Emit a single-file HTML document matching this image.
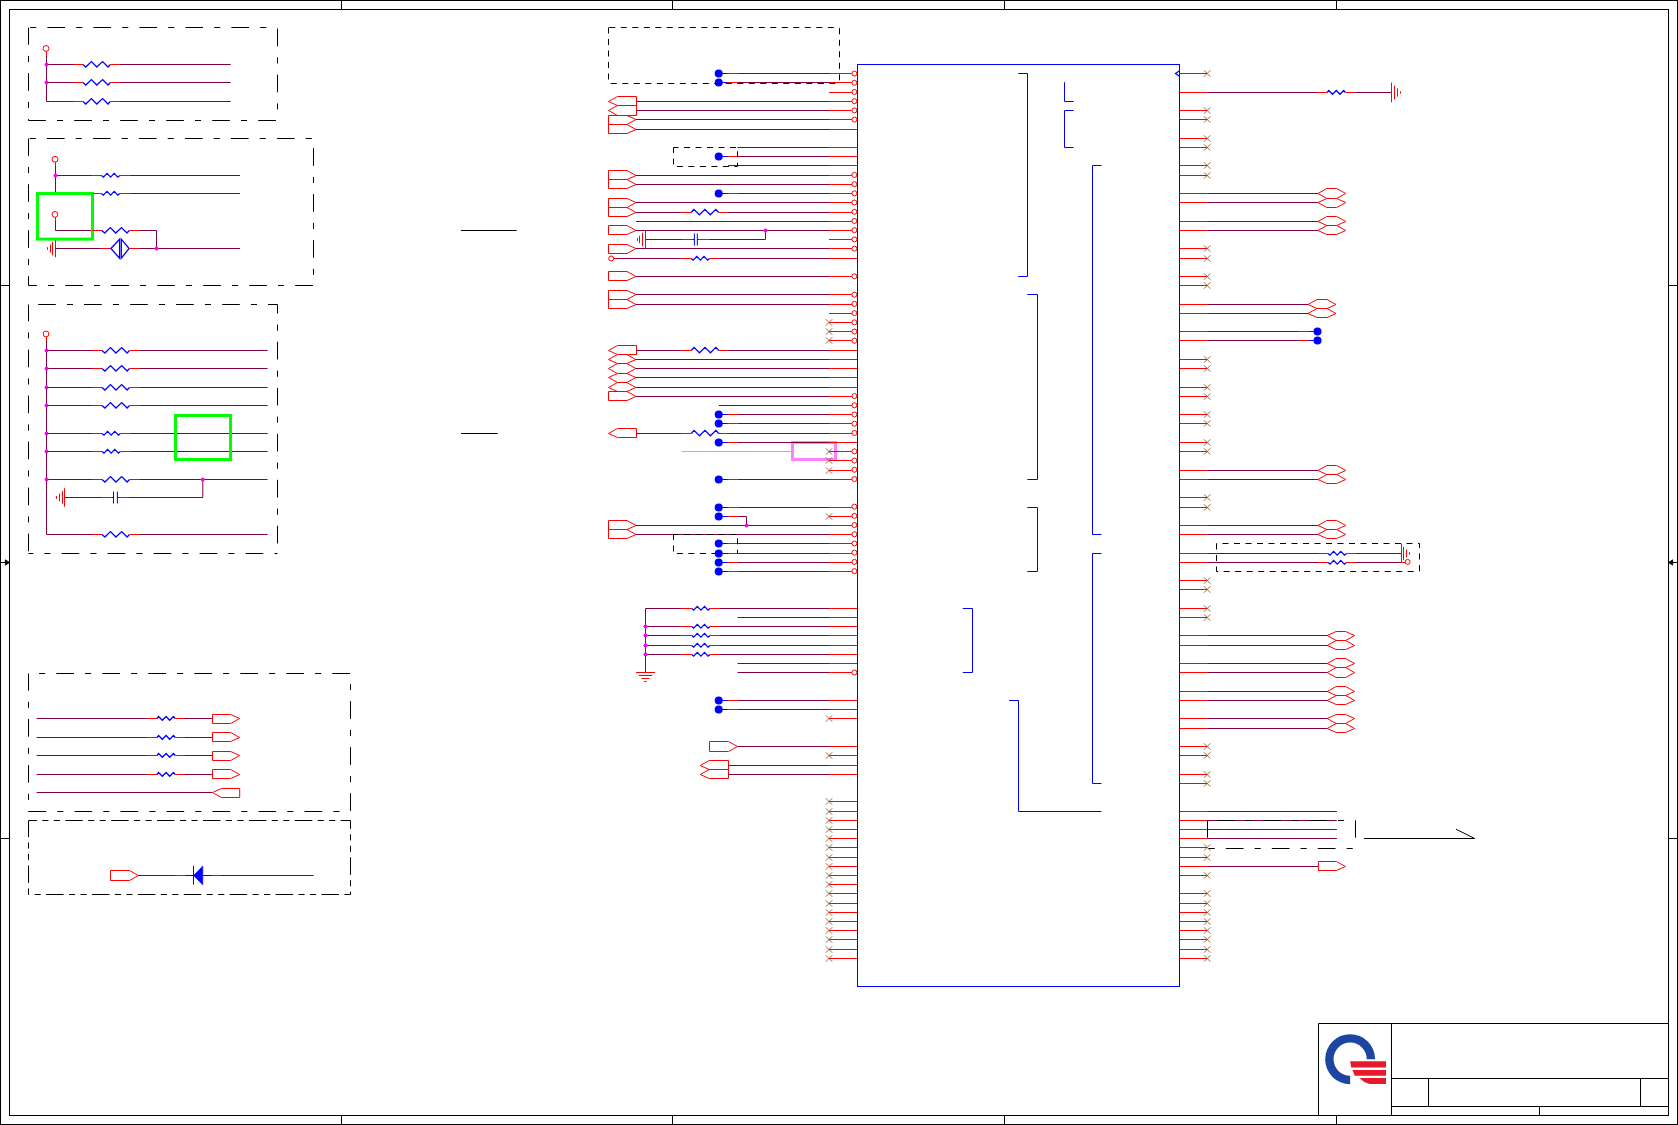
<!DOCTYPE html>
<html><head><meta charset="utf-8"><style>html,body{margin:0;padding:0;background:#fff;width:1678px;height:1125px;overflow:hidden}svg{display:block}</style></head>
<body><svg width="1678" height="1125" viewBox="0 0 1678 1125"><rect width="1678" height="1125" fill="#fff"/>
<rect x="0.5" y="0.5" width="1677" height="1124" fill="none" stroke="#000000" stroke-width="1"/>
<rect x="9.5" y="9.5" width="1659" height="1106" fill="none" stroke="#000000" stroke-width="1"/>
<line x1="341.5" y1="0" x2="341.5" y2="9.5" stroke="#000000" stroke-width="1"/>
<line x1="341.5" y1="1115.5" x2="341.5" y2="1125" stroke="#000000" stroke-width="1"/>
<line x1="672.5" y1="0" x2="672.5" y2="9.5" stroke="#000000" stroke-width="1"/>
<line x1="672.5" y1="1115.5" x2="672.5" y2="1125" stroke="#000000" stroke-width="1"/>
<line x1="1004.5" y1="0" x2="1004.5" y2="9.5" stroke="#000000" stroke-width="1"/>
<line x1="1004.5" y1="1115.5" x2="1004.5" y2="1125" stroke="#000000" stroke-width="1"/>
<line x1="1336.5" y1="0" x2="1336.5" y2="9.5" stroke="#000000" stroke-width="1"/>
<line x1="1336.5" y1="1115.5" x2="1336.5" y2="1125" stroke="#000000" stroke-width="1"/>
<line x1="0" y1="285.5" x2="9.5" y2="285.5" stroke="#000000" stroke-width="1"/>
<line x1="1668.5" y1="285.5" x2="1678" y2="285.5" stroke="#000000" stroke-width="1"/>
<line x1="0" y1="838.5" x2="9.5" y2="838.5" stroke="#000000" stroke-width="1"/>
<line x1="1668.5" y1="838.5" x2="1678" y2="838.5" stroke="#000000" stroke-width="1"/>
<line x1="0" y1="562.5" x2="9.5" y2="562.5" stroke="#000000" stroke-width="1"/>
<line x1="1668.5" y1="562.5" x2="1678" y2="562.5" stroke="#000000" stroke-width="1"/>
<polygon points="9.50,562.50 5.30,559.80 5.30,565.20" fill="#000000" stroke="#000000" stroke-width="0.8"/>
<polygon points="1668.50,562.50 1672.70,559.80 1672.70,565.20" fill="#000000" stroke="#000000" stroke-width="0.8"/>
<path d="M1318.5,1115.5V1023.5H1668.5" fill="none" stroke="#000000"/>
<line x1="1391.5" y1="1023.5" x2="1391.5" y2="1115.5" stroke="#000000" stroke-width="1"/>
<line x1="1391.5" y1="1078.5" x2="1668.5" y2="1078.5" stroke="#000000" stroke-width="1"/>
<line x1="1391.5" y1="1106.5" x2="1668.5" y2="1106.5" stroke="#000000" stroke-width="1"/>
<line x1="1428.5" y1="1078.5" x2="1428.5" y2="1106.5" stroke="#000000" stroke-width="1"/>
<line x1="1640.5" y1="1078.5" x2="1640.5" y2="1106.5" stroke="#000000" stroke-width="1"/>
<line x1="1539.5" y1="1106.5" x2="1539.5" y2="1115.5" stroke="#000000" stroke-width="1"/>
<path d="M1375.15,1059.20 A25.0,25.0 0 1 0 1350.15,1084.20 L1350.15,1075.80 A16.6,16.6 0 1 1 1366.75,1059.20 Z" fill="#1d45a3"/>
<path d="M1350.1,1061.3 H1386 V1067.5 H1351.3 Z M1352.4,1070.1 H1386 V1075.8 H1354.7 Z M1359.2,1078.1 H1386 V1084 H1369.5 Q1363.5,1082.5 1359.2,1078.1 Z" fill="#e41b2d"/>
<circle cx="46.05" cy="48.46" r="2.9" fill="none" stroke="#ff0000" stroke-width="1"/>
<line x1="46.5" y1="51.4" x2="46.5" y2="55.7" stroke="#ff0000" stroke-width="1"/>
<line x1="46.5" y1="55.7" x2="46.5" y2="101.5" stroke="#800040" stroke-width="1"/>
<line x1="46.5" y1="64.5" x2="73.9" y2="64.5" stroke="#800040" stroke-width="1"/>
<line x1="73.9" y1="64.5" x2="82.9" y2="64.5" stroke="#ff0000" stroke-width="1"/>
<polyline points="82.90,64.50 85.80,67.00 91.40,61.60 96.80,67.00 102.60,61.60 108.00,67.00 110.40,64.50" fill="none" stroke="#0000ff" stroke-width="1.3"/>
<line x1="110.4" y1="64.5" x2="120.10000000000001" y2="64.5" stroke="#ff0000" stroke-width="1"/>
<line x1="120.10000000000001" y1="64.5" x2="230.7" y2="64.5" stroke="#800040" stroke-width="1"/>
<line x1="46.5" y1="82.5" x2="73.9" y2="82.5" stroke="#800040" stroke-width="1"/>
<line x1="73.9" y1="82.5" x2="82.9" y2="82.5" stroke="#ff0000" stroke-width="1"/>
<polyline points="82.90,82.50 85.80,85.00 91.40,79.60 96.80,85.00 102.60,79.60 108.00,85.00 110.40,82.50" fill="none" stroke="#0000ff" stroke-width="1.3"/>
<line x1="110.4" y1="82.5" x2="120.10000000000001" y2="82.5" stroke="#ff0000" stroke-width="1"/>
<line x1="120.10000000000001" y1="82.5" x2="230.7" y2="82.5" stroke="#800040" stroke-width="1"/>
<line x1="46.5" y1="101.5" x2="73.9" y2="101.5" stroke="#800040" stroke-width="1"/>
<line x1="73.9" y1="101.5" x2="82.9" y2="101.5" stroke="#ff0000" stroke-width="1"/>
<polyline points="82.90,101.50 85.80,104.00 91.40,98.60 96.80,104.00 102.60,98.60 108.00,104.00 110.40,101.50" fill="none" stroke="#0000ff" stroke-width="1.3"/>
<line x1="110.4" y1="101.5" x2="120.10000000000001" y2="101.5" stroke="#ff0000" stroke-width="1"/>
<line x1="120.10000000000001" y1="101.5" x2="230.7" y2="101.5" stroke="#800040" stroke-width="1"/>
<circle cx="55.0" cy="159.2" r="2.9" fill="none" stroke="#ff0000" stroke-width="1"/>
<line x1="55.5" y1="162.1" x2="55.5" y2="166" stroke="#ff0000" stroke-width="1"/>
<line x1="55.5" y1="166" x2="55.5" y2="192" stroke="#800040" stroke-width="1"/>
<line x1="55.5" y1="175.5" x2="92.2" y2="175.5" stroke="#800040" stroke-width="1"/>
<line x1="92.2" y1="175.5" x2="101.4" y2="175.5" stroke="#ff0000" stroke-width="1"/>
<polyline points="101.40,175.50 103.40,177.10 107.00,173.40 110.60,177.10 114.20,173.40 117.80,177.10 119.80,175.50" fill="none" stroke="#0000ff" stroke-width="1.3"/>
<line x1="119.80000000000001" y1="175.5" x2="129.4" y2="175.5" stroke="#ff0000" stroke-width="1"/>
<line x1="129.4" y1="175.5" x2="240" y2="175.5" stroke="#800040" stroke-width="1"/>
<line x1="55.5" y1="193.5" x2="92.2" y2="193.5" stroke="#800040" stroke-width="1"/>
<line x1="92.2" y1="193.5" x2="101.4" y2="193.5" stroke="#ff0000" stroke-width="1"/>
<polyline points="101.40,193.50 103.40,195.10 107.00,191.40 110.60,195.10 114.20,191.40 117.80,195.10 119.80,193.50" fill="none" stroke="#0000ff" stroke-width="1.3"/>
<line x1="119.80000000000001" y1="193.5" x2="129.4" y2="193.5" stroke="#ff0000" stroke-width="1"/>
<line x1="129.4" y1="193.5" x2="240" y2="193.5" stroke="#800040" stroke-width="1"/>
<circle cx="55.0" cy="214.4" r="2.9" fill="none" stroke="#ff0000" stroke-width="1"/>
<line x1="55.5" y1="217.3" x2="55.5" y2="221" stroke="#ff0000" stroke-width="1"/>
<line x1="55.5" y1="221" x2="55.5" y2="230.5" stroke="#800040" stroke-width="1"/>
<line x1="55.5" y1="230.5" x2="92.2" y2="230.5" stroke="#800040" stroke-width="1"/>
<line x1="92.2" y1="230.5" x2="101.8" y2="230.5" stroke="#ff0000" stroke-width="1"/>
<polyline points="101.80,230.50 104.70,233.00 110.30,227.60 115.70,233.00 121.50,227.60 126.90,233.00 129.30,230.50" fill="none" stroke="#0000ff" stroke-width="1.3"/>
<line x1="129.3" y1="230.5" x2="139.3" y2="230.5" stroke="#ff0000" stroke-width="1"/>
<line x1="139.3" y1="230.5" x2="156.5" y2="230.5" stroke="#800040" stroke-width="1"/>
<line x1="156.5" y1="230.5" x2="156.5" y2="248.5" stroke="#800040" stroke-width="1"/>
<line x1="55.5" y1="239.75" x2="55.5" y2="257.25" stroke="#ff0000" stroke-width="1"/>
<line x1="52.5" y1="241.75" x2="52.5" y2="255.25" stroke="#ff0000" stroke-width="1"/>
<line x1="50.5" y1="244.5" x2="50.5" y2="252.5" stroke="#ff0000" stroke-width="1"/>
<line x1="47.5" y1="247.2" x2="47.5" y2="249.8" stroke="#ff0000" stroke-width="1"/>
<line x1="55.5" y1="248.5" x2="101.1" y2="248.5" stroke="#800040" stroke-width="1"/>
<line x1="101.1" y1="248.5" x2="110.9" y2="248.5" stroke="#ff0000" stroke-width="1"/>
<polygon points="110.90,248.50 119.60,239.20 119.60,258.20" fill="none" stroke="#0000ff" stroke-width="1.3"/>
<polygon points="129.10,248.50 121.30,239.20 121.30,258.20" fill="none" stroke="#0000ff" stroke-width="1.3"/>
<line x1="129.1" y1="248.5" x2="138.8" y2="248.5" stroke="#ff0000" stroke-width="1"/>
<line x1="138.8" y1="248.5" x2="240" y2="248.5" stroke="#800040" stroke-width="1"/>
<rect x="37.5" y="193.5" width="55" height="45.6" fill="none" stroke="#00ff00" stroke-width="3"/>
<line x1="92.2" y1="193.5" x2="101.4" y2="193.5" stroke="#ff0000" stroke-width="1"/>
<line x1="92.2" y1="230.5" x2="101.8" y2="230.5" stroke="#ff0000" stroke-width="1"/>
<circle cx="46.05" cy="334" r="2.9" fill="none" stroke="#ff0000" stroke-width="1"/>
<line x1="46.5" y1="336.9" x2="46.5" y2="341" stroke="#ff0000" stroke-width="1"/>
<line x1="46.5" y1="341" x2="46.5" y2="534.5" stroke="#800040" stroke-width="1"/>
<line x1="46.5" y1="350.5" x2="92" y2="350.5" stroke="#800040" stroke-width="1"/>
<line x1="92" y1="350.5" x2="102.0" y2="350.5" stroke="#ff0000" stroke-width="1"/>
<polyline points="102.00,350.50 104.90,353.00 110.50,347.60 115.90,353.00 121.70,347.60 127.10,353.00 129.50,350.50" fill="none" stroke="#0000ff" stroke-width="1.3"/>
<line x1="129.5" y1="350.5" x2="139.3" y2="350.5" stroke="#ff0000" stroke-width="1"/>
<line x1="139.3" y1="350.5" x2="267.6" y2="350.5" stroke="#800040" stroke-width="1"/>
<line x1="46.5" y1="368.5" x2="92" y2="368.5" stroke="#800040" stroke-width="1"/>
<line x1="92" y1="368.5" x2="102.0" y2="368.5" stroke="#ff0000" stroke-width="1"/>
<polyline points="102.00,368.50 104.90,371.00 110.50,365.60 115.90,371.00 121.70,365.60 127.10,371.00 129.50,368.50" fill="none" stroke="#0000ff" stroke-width="1.3"/>
<line x1="129.5" y1="368.5" x2="139.3" y2="368.5" stroke="#ff0000" stroke-width="1"/>
<line x1="139.3" y1="368.5" x2="267.6" y2="368.5" stroke="#800040" stroke-width="1"/>
<line x1="46.5" y1="387.5" x2="92" y2="387.5" stroke="#800040" stroke-width="1"/>
<line x1="92" y1="387.5" x2="102.0" y2="387.5" stroke="#ff0000" stroke-width="1"/>
<polyline points="102.00,387.50 104.90,390.00 110.50,384.60 115.90,390.00 121.70,384.60 127.10,390.00 129.50,387.50" fill="none" stroke="#0000ff" stroke-width="1.3"/>
<line x1="129.5" y1="387.5" x2="139.3" y2="387.5" stroke="#ff0000" stroke-width="1"/>
<line x1="139.3" y1="387.5" x2="267.6" y2="387.5" stroke="#800040" stroke-width="1"/>
<line x1="46.5" y1="405.5" x2="92" y2="405.5" stroke="#800040" stroke-width="1"/>
<line x1="92" y1="405.5" x2="102.0" y2="405.5" stroke="#ff0000" stroke-width="1"/>
<polyline points="102.00,405.50 104.90,408.00 110.50,402.60 115.90,408.00 121.70,402.60 127.10,408.00 129.50,405.50" fill="none" stroke="#0000ff" stroke-width="1.3"/>
<line x1="129.5" y1="405.5" x2="139.3" y2="405.5" stroke="#ff0000" stroke-width="1"/>
<line x1="139.3" y1="405.5" x2="267.6" y2="405.5" stroke="#800040" stroke-width="1"/>
<line x1="46.5" y1="433.5" x2="92" y2="433.5" stroke="#800040" stroke-width="1"/>
<line x1="92" y1="433.5" x2="102.0" y2="433.5" stroke="#ff0000" stroke-width="1"/>
<polyline points="102.00,433.50 104.00,435.10 107.60,431.40 111.20,435.10 114.80,431.40 118.40,435.10 120.40,433.50" fill="none" stroke="#0000ff" stroke-width="1.3"/>
<line x1="120.4" y1="433.5" x2="130.20000000000002" y2="433.5" stroke="#ff0000" stroke-width="1"/>
<line x1="130.20000000000002" y1="433.5" x2="267.6" y2="433.5" stroke="#800040" stroke-width="1"/>
<line x1="46.5" y1="451.5" x2="92" y2="451.5" stroke="#800040" stroke-width="1"/>
<line x1="92" y1="451.5" x2="102.0" y2="451.5" stroke="#ff0000" stroke-width="1"/>
<polyline points="102.00,451.50 104.00,453.10 107.60,449.40 111.20,453.10 114.80,449.40 118.40,453.10 120.40,451.50" fill="none" stroke="#0000ff" stroke-width="1.3"/>
<line x1="120.4" y1="451.5" x2="130.20000000000002" y2="451.5" stroke="#ff0000" stroke-width="1"/>
<line x1="130.20000000000002" y1="451.5" x2="267.6" y2="451.5" stroke="#800040" stroke-width="1"/>
<line x1="46.5" y1="479.5" x2="92" y2="479.5" stroke="#800040" stroke-width="1"/>
<line x1="92" y1="479.5" x2="102.0" y2="479.5" stroke="#ff0000" stroke-width="1"/>
<polyline points="102.00,479.50 104.90,482.00 110.50,476.60 115.90,482.00 121.70,476.60 127.10,482.00 129.50,479.50" fill="none" stroke="#0000ff" stroke-width="1.3"/>
<line x1="129.5" y1="479.5" x2="139.3" y2="479.5" stroke="#ff0000" stroke-width="1"/>
<line x1="139.3" y1="479.5" x2="267.6" y2="479.5" stroke="#800040" stroke-width="1"/>
<line x1="46.5" y1="534.5" x2="92" y2="534.5" stroke="#800040" stroke-width="1"/>
<line x1="92" y1="534.5" x2="102.0" y2="534.5" stroke="#ff0000" stroke-width="1"/>
<polyline points="102.00,534.50 104.90,537.00 110.50,531.60 115.90,537.00 121.70,531.60 127.10,537.00 129.50,534.50" fill="none" stroke="#0000ff" stroke-width="1.3"/>
<line x1="129.5" y1="534.5" x2="139.3" y2="534.5" stroke="#ff0000" stroke-width="1"/>
<line x1="139.3" y1="534.5" x2="267.6" y2="534.5" stroke="#800040" stroke-width="1"/>
<rect x="175.5" y="415.5" width="55" height="44" fill="none" stroke="#00ff00" stroke-width="3"/>
<line x1="202.8" y1="479.5" x2="202.8" y2="497.5" stroke="#800040" stroke-width="1"/>
<line x1="64.5" y1="488.25" x2="64.5" y2="506.75" stroke="#ff0000" stroke-width="1"/>
<line x1="62.5" y1="491.2" x2="62.5" y2="503.8" stroke="#ff0000" stroke-width="1"/>
<line x1="59.5" y1="493.65" x2="59.5" y2="501.35" stroke="#ff0000" stroke-width="1"/>
<line x1="56.5" y1="496.1" x2="56.5" y2="498.9" stroke="#ff0000" stroke-width="1"/>
<line x1="64.5" y1="497.5" x2="101" y2="497.5" stroke="#800040" stroke-width="1"/>
<line x1="101" y1="497.5" x2="111.2" y2="497.5" stroke="#ff0000" stroke-width="1"/>
<line x1="111.2" y1="497.5" x2="113.5" y2="497.5" stroke="#0000ff" stroke-width="1"/>
<line x1="113.5" y1="491.5" x2="113.5" y2="503.5" stroke="#0000ff" stroke-width="1"/>
<line x1="117.4" y1="491.5" x2="117.4" y2="503.5" stroke="#0000ff" stroke-width="1"/>
<line x1="117.4" y1="497.5" x2="119.7" y2="497.5" stroke="#0000ff" stroke-width="1"/>
<line x1="119.7" y1="497.5" x2="129.1" y2="497.5" stroke="#ff0000" stroke-width="1"/>
<line x1="129.1" y1="497.5" x2="202.8" y2="497.5" stroke="#800040" stroke-width="1"/>
<line x1="36.6" y1="718.5" x2="147.3" y2="718.5" stroke="#800040" stroke-width="1"/>
<line x1="147.3" y1="718.5" x2="157.0" y2="718.5" stroke="#ff0000" stroke-width="1"/>
<polyline points="157.00,718.50 158.60,716.50 162.30,720.30 166.10,716.50 169.70,720.30 173.50,716.50 175.20,718.50" fill="none" stroke="#0000ff" stroke-width="1.3"/>
<line x1="175.2" y1="718.5" x2="184.89999999999998" y2="718.5" stroke="#ff0000" stroke-width="1"/>
<line x1="184.89999999999998" y1="718.5" x2="212.5" y2="718.5" stroke="#800040" stroke-width="1"/>
<polygon points="212.50,714.50 230.70,714.50 239.70,718.50 230.70,723.50 212.50,723.50" fill="none" stroke="#ff0000" stroke-width="1"/>
<line x1="36.6" y1="737.5" x2="147.3" y2="737.5" stroke="#800040" stroke-width="1"/>
<line x1="147.3" y1="737.5" x2="157.0" y2="737.5" stroke="#ff0000" stroke-width="1"/>
<polyline points="157.00,737.50 158.60,735.50 162.30,739.30 166.10,735.50 169.70,739.30 173.50,735.50 175.20,737.50" fill="none" stroke="#0000ff" stroke-width="1.3"/>
<line x1="175.2" y1="737.5" x2="184.89999999999998" y2="737.5" stroke="#ff0000" stroke-width="1"/>
<line x1="184.89999999999998" y1="737.5" x2="212.5" y2="737.5" stroke="#800040" stroke-width="1"/>
<polygon points="212.50,732.50 230.70,732.50 239.70,737.50 230.70,741.50 212.50,741.50" fill="none" stroke="#ff0000" stroke-width="1"/>
<line x1="36.6" y1="755.5" x2="147.3" y2="755.5" stroke="#800040" stroke-width="1"/>
<line x1="147.3" y1="755.5" x2="157.0" y2="755.5" stroke="#ff0000" stroke-width="1"/>
<polyline points="157.00,755.50 158.60,753.50 162.30,757.30 166.10,753.50 169.70,757.30 173.50,753.50 175.20,755.50" fill="none" stroke="#0000ff" stroke-width="1.3"/>
<line x1="175.2" y1="755.5" x2="184.89999999999998" y2="755.5" stroke="#ff0000" stroke-width="1"/>
<line x1="184.89999999999998" y1="755.5" x2="212.5" y2="755.5" stroke="#800040" stroke-width="1"/>
<polygon points="212.50,751.50 230.70,751.50 239.70,755.50 230.70,760.50 212.50,760.50" fill="none" stroke="#ff0000" stroke-width="1"/>
<line x1="36.6" y1="774.5" x2="147.3" y2="774.5" stroke="#800040" stroke-width="1"/>
<line x1="147.3" y1="774.5" x2="157.0" y2="774.5" stroke="#ff0000" stroke-width="1"/>
<polyline points="157.00,774.50 158.60,772.50 162.30,776.30 166.10,772.50 169.70,776.30 173.50,772.50 175.20,774.50" fill="none" stroke="#0000ff" stroke-width="1.3"/>
<line x1="175.2" y1="774.5" x2="184.89999999999998" y2="774.5" stroke="#ff0000" stroke-width="1"/>
<line x1="184.89999999999998" y1="774.5" x2="212.5" y2="774.5" stroke="#800040" stroke-width="1"/>
<polygon points="212.50,769.50 230.70,769.50 239.70,774.50 230.70,778.50 212.50,778.50" fill="none" stroke="#ff0000" stroke-width="1"/>
<line x1="36.6" y1="792.5" x2="212" y2="792.5" stroke="#800040" stroke-width="1"/>
<polygon points="239.70,788.50 221.50,788.50 212.50,792.50 221.50,797.50 239.70,797.50" fill="none" stroke="#ff0000" stroke-width="1"/>
<polygon points="110.50,870.50 129.50,870.50 138.50,875.50 129.50,880.50 110.50,880.50" fill="none" stroke="#ff0000" stroke-width="1"/>
<line x1="138.4" y1="875.5" x2="175" y2="875.5" stroke="#800040" stroke-width="1"/>
<line x1="175" y1="875.5" x2="184.7" y2="875.5" stroke="#ff0000" stroke-width="1"/>
<line x1="184.7" y1="875.5" x2="193.2" y2="875.5" stroke="#0000ff" stroke-width="1"/>
<line x1="193.5" y1="865.8" x2="193.5" y2="884.6" stroke="#0000ff" stroke-width="1"/>
<polygon points="193.50,875.50 202.80,866.00 202.80,885.00" fill="#0000ff" stroke="#0000ff" stroke-width="0.5"/>
<line x1="202.8" y1="875.5" x2="212" y2="875.5" stroke="#0000ff" stroke-width="1"/>
<line x1="212" y1="875.5" x2="221" y2="875.5" stroke="#ff0000" stroke-width="1"/>
<line x1="221" y1="875.5" x2="313.7" y2="875.5" stroke="#800040" stroke-width="1"/>
<line x1="460.9" y1="230.5" x2="516.7" y2="230.5" stroke="#000000" stroke-width="1"/>
<line x1="461" y1="433.5" x2="497.7" y2="433.5" stroke="#000000" stroke-width="1"/>
<line x1="673.5" y1="553.5" x2="737.5" y2="553.5" stroke="#000000" stroke-width="1" stroke-dasharray="6 5.5" stroke-dashoffset="8.1"/>
<line x1="681.8" y1="451.5" x2="791.6" y2="451.5" stroke="#ff80ff" stroke-width="1"/>
<rect x="792.5" y="442.5" width="43" height="17" fill="none" stroke="#ff80ff" stroke-width="3"/>
<line x1="829.0" y1="73.5" x2="851.9" y2="73.5" stroke="#ff0000" stroke-width="1"/>
<circle cx="854.4" cy="73.55" r="2.5" fill="none" stroke="#ff0000" stroke-width="1"/>
<circle cx="718.7" cy="73.5" r="4" fill="#0000ff" stroke="none" stroke-width="0"/>
<line x1="718.7" y1="73.5" x2="727.9" y2="73.5" stroke="#0000ff" stroke-width="1"/>
<line x1="727.9" y1="73.5" x2="737.9" y2="73.5" stroke="#ff0000" stroke-width="1"/>
<line x1="737.9" y1="73.5" x2="829.0" y2="73.5" stroke="#800040" stroke-width="1"/>
<line x1="829.0" y1="82.5" x2="851.9" y2="82.5" stroke="#ff0000" stroke-width="1"/>
<circle cx="854.4" cy="82.7646" r="2.5" fill="none" stroke="#ff0000" stroke-width="1"/>
<circle cx="718.7" cy="82.5" r="4" fill="#0000ff" stroke="none" stroke-width="0"/>
<line x1="718.7" y1="82.5" x2="727.9" y2="82.5" stroke="#0000ff" stroke-width="1"/>
<line x1="727.9" y1="82.5" x2="737.9" y2="82.5" stroke="#ff0000" stroke-width="1"/>
<line x1="737.9" y1="82.5" x2="829.0" y2="82.5" stroke="#800040" stroke-width="1"/>
<line x1="829.0" y1="92.5" x2="851.9" y2="92.5" stroke="#ff0000" stroke-width="1"/>
<circle cx="854.4" cy="91.97919999999999" r="2.5" fill="none" stroke="#ff0000" stroke-width="1"/>
<line x1="829.0" y1="101.5" x2="851.9" y2="101.5" stroke="#ff0000" stroke-width="1"/>
<circle cx="854.4" cy="101.1938" r="2.5" fill="none" stroke="#ff0000" stroke-width="1"/>
<polygon points="636.50,96.50 617.50,96.50 608.50,101.50 617.50,105.50 636.50,105.50" fill="none" stroke="#ff0000" stroke-width="1"/>
<line x1="636.5" y1="101.5" x2="829.0" y2="101.5" stroke="#800040" stroke-width="1"/>
<line x1="829.0" y1="110.5" x2="851.9" y2="110.5" stroke="#ff0000" stroke-width="1"/>
<circle cx="854.4" cy="110.4084" r="2.5" fill="none" stroke="#ff0000" stroke-width="1"/>
<polygon points="636.50,105.50 617.50,105.50 608.50,110.50 617.50,115.50 636.50,115.50" fill="none" stroke="#ff0000" stroke-width="1"/>
<line x1="636.5" y1="110.5" x2="829.0" y2="110.5" stroke="#800040" stroke-width="1"/>
<line x1="829.0" y1="119.5" x2="851.9" y2="119.5" stroke="#ff0000" stroke-width="1"/>
<circle cx="854.4" cy="119.623" r="2.5" fill="none" stroke="#ff0000" stroke-width="1"/>
<polygon points="608.50,115.50 627.00,115.50 636.00,119.50 627.00,124.50 608.50,124.50" fill="none" stroke="#ff0000" stroke-width="1"/>
<line x1="636.0" y1="119.5" x2="829.0" y2="119.5" stroke="#800040" stroke-width="1"/>
<line x1="829.0" y1="129.5" x2="857.5" y2="129.5" stroke="#ff0000" stroke-width="1"/>
<polygon points="608.50,124.50 627.00,124.50 636.00,129.50 627.00,133.50 608.50,133.50" fill="none" stroke="#ff0000" stroke-width="1"/>
<line x1="636.0" y1="129.5" x2="829.0" y2="129.5" stroke="#800040" stroke-width="1"/>
<line x1="829.0" y1="147.5" x2="857.5" y2="147.5" stroke="#ff0000" stroke-width="1"/>
<line x1="737.5" y1="147.5" x2="829.0" y2="147.5" stroke="#800040" stroke-width="1"/>
<line x1="829.0" y1="156.5" x2="857.5" y2="156.5" stroke="#ff0000" stroke-width="1"/>
<circle cx="718.7" cy="156.5" r="4" fill="#0000ff" stroke="none" stroke-width="0"/>
<line x1="718.7" y1="156.5" x2="727.9" y2="156.5" stroke="#0000ff" stroke-width="1"/>
<line x1="727.9" y1="156.5" x2="737.9" y2="156.5" stroke="#ff0000" stroke-width="1"/>
<line x1="737.9" y1="156.5" x2="829.0" y2="156.5" stroke="#800040" stroke-width="1"/>
<line x1="829.0" y1="165.5" x2="857.5" y2="165.5" stroke="#ff0000" stroke-width="1"/>
<line x1="728.0" y1="165.5" x2="829.0" y2="165.5" stroke="#800040" stroke-width="1"/>
<line x1="829.0" y1="175.5" x2="851.9" y2="175.5" stroke="#ff0000" stroke-width="1"/>
<circle cx="854.4" cy="174.9106" r="2.5" fill="none" stroke="#ff0000" stroke-width="1"/>
<polygon points="608.50,170.50 627.00,170.50 636.00,175.50 627.00,179.50 608.50,179.50" fill="none" stroke="#ff0000" stroke-width="1"/>
<line x1="636.0" y1="175.5" x2="829.0" y2="175.5" stroke="#800040" stroke-width="1"/>
<line x1="829.0" y1="184.5" x2="851.9" y2="184.5" stroke="#ff0000" stroke-width="1"/>
<circle cx="854.4" cy="184.1252" r="2.5" fill="none" stroke="#ff0000" stroke-width="1"/>
<polygon points="608.50,179.50 627.00,179.50 636.00,184.50 627.00,188.50 608.50,188.50" fill="none" stroke="#ff0000" stroke-width="1"/>
<line x1="636.0" y1="184.5" x2="829.0" y2="184.5" stroke="#800040" stroke-width="1"/>
<line x1="829.0" y1="193.5" x2="851.9" y2="193.5" stroke="#ff0000" stroke-width="1"/>
<circle cx="854.4" cy="193.33980000000003" r="2.5" fill="none" stroke="#ff0000" stroke-width="1"/>
<circle cx="718.7" cy="193.5" r="4" fill="#0000ff" stroke="none" stroke-width="0"/>
<line x1="718.7" y1="193.5" x2="727.9" y2="193.5" stroke="#0000ff" stroke-width="1"/>
<line x1="727.9" y1="193.5" x2="737.9" y2="193.5" stroke="#ff0000" stroke-width="1"/>
<line x1="737.9" y1="193.5" x2="829.0" y2="193.5" stroke="#800040" stroke-width="1"/>
<line x1="829.0" y1="202.5" x2="851.9" y2="202.5" stroke="#ff0000" stroke-width="1"/>
<circle cx="854.4" cy="202.5544" r="2.5" fill="none" stroke="#ff0000" stroke-width="1"/>
<polygon points="608.50,198.50 627.00,198.50 636.00,202.50 627.00,207.50 608.50,207.50" fill="none" stroke="#ff0000" stroke-width="1"/>
<line x1="636.0" y1="202.5" x2="829.0" y2="202.5" stroke="#800040" stroke-width="1"/>
<line x1="829.0" y1="212.5" x2="851.9" y2="212.5" stroke="#ff0000" stroke-width="1"/>
<circle cx="854.4" cy="211.769" r="2.5" fill="none" stroke="#ff0000" stroke-width="1"/>
<polygon points="608.50,207.50 627.00,207.50 636.00,212.50 627.00,216.50 608.50,216.50" fill="none" stroke="#ff0000" stroke-width="1"/>
<line x1="636" y1="212.5" x2="681.8" y2="212.5" stroke="#800040" stroke-width="1"/>
<line x1="681.8" y1="212.5" x2="691.1999999999999" y2="212.5" stroke="#ff0000" stroke-width="1"/>
<polyline points="691.20,212.50 693.90,209.40 699.40,214.80 704.90,209.40 710.30,214.80 715.80,209.40 718.70,212.50" fill="none" stroke="#0000ff" stroke-width="1.3"/>
<line x1="718.6999999999999" y1="212.5" x2="727.9999999999999" y2="212.5" stroke="#ff0000" stroke-width="1"/>
<line x1="727.9999999999999" y1="212.5" x2="829.0" y2="212.5" stroke="#800040" stroke-width="1"/>
<line x1="829.0" y1="221.5" x2="851.9" y2="221.5" stroke="#ff0000" stroke-width="1"/>
<circle cx="854.4" cy="220.98360000000002" r="2.5" fill="none" stroke="#ff0000" stroke-width="1"/>
<line x1="636.0" y1="221.5" x2="829.0" y2="221.5" stroke="#800040" stroke-width="1"/>
<line x1="829.0" y1="230.5" x2="851.9" y2="230.5" stroke="#ff0000" stroke-width="1"/>
<circle cx="854.4" cy="230.19819999999999" r="2.5" fill="none" stroke="#ff0000" stroke-width="1"/>
<polygon points="608.50,225.50 627.00,225.50 636.00,230.50 627.00,234.50 608.50,234.50" fill="none" stroke="#ff0000" stroke-width="1"/>
<line x1="636.0" y1="230.5" x2="829.0" y2="230.5" stroke="#800040" stroke-width="1"/>
<line x1="829.0" y1="239.5" x2="851.9" y2="239.5" stroke="#ff0000" stroke-width="1"/>
<circle cx="854.4" cy="239.4128" r="2.5" fill="none" stroke="#ff0000" stroke-width="1"/>
<line x1="829.0" y1="248.5" x2="851.9" y2="248.5" stroke="#ff0000" stroke-width="1"/>
<circle cx="854.4" cy="248.62740000000002" r="2.5" fill="none" stroke="#ff0000" stroke-width="1"/>
<polygon points="608.50,244.50 627.00,244.50 636.00,248.50 627.00,253.50 608.50,253.50" fill="none" stroke="#ff0000" stroke-width="1"/>
<line x1="636.0" y1="248.5" x2="829.0" y2="248.5" stroke="#800040" stroke-width="1"/>
<line x1="829.0" y1="258.5" x2="857.5" y2="258.5" stroke="#ff0000" stroke-width="1"/>
<circle cx="611.2" cy="258.5" r="2.5" fill="none" stroke="#ff0000" stroke-width="1"/>
<line x1="613.7" y1="258.5" x2="617" y2="258.5" stroke="#ff0000" stroke-width="1"/>
<line x1="617" y1="258.5" x2="681.8" y2="258.5" stroke="#800040" stroke-width="1"/>
<line x1="681.8" y1="258.5" x2="691.1999999999999" y2="258.5" stroke="#ff0000" stroke-width="1"/>
<polyline points="691.20,258.50 693.20,260.10 696.80,256.40 700.40,260.10 704.00,256.40 707.60,260.10 709.60,258.50" fill="none" stroke="#0000ff" stroke-width="1.3"/>
<line x1="709.5999999999999" y1="258.5" x2="718.8" y2="258.5" stroke="#ff0000" stroke-width="1"/>
<line x1="718.8" y1="258.5" x2="829.0" y2="258.5" stroke="#800040" stroke-width="1"/>
<line x1="829.0" y1="276.5" x2="851.9" y2="276.5" stroke="#ff0000" stroke-width="1"/>
<circle cx="854.4" cy="276.2712" r="2.5" fill="none" stroke="#ff0000" stroke-width="1"/>
<polygon points="608.50,271.50 627.00,271.50 636.00,276.50 627.00,280.50 608.50,280.50" fill="none" stroke="#ff0000" stroke-width="1"/>
<line x1="636.0" y1="276.5" x2="829.0" y2="276.5" stroke="#800040" stroke-width="1"/>
<line x1="829.0" y1="294.5" x2="851.9" y2="294.5" stroke="#ff0000" stroke-width="1"/>
<circle cx="854.4" cy="294.7004" r="2.5" fill="none" stroke="#ff0000" stroke-width="1"/>
<polygon points="608.50,290.50 627.00,290.50 636.00,294.50 627.00,299.50 608.50,299.50" fill="none" stroke="#ff0000" stroke-width="1"/>
<line x1="636.0" y1="294.5" x2="829.0" y2="294.5" stroke="#800040" stroke-width="1"/>
<line x1="829.0" y1="304.5" x2="851.9" y2="304.5" stroke="#ff0000" stroke-width="1"/>
<circle cx="854.4" cy="303.915" r="2.5" fill="none" stroke="#ff0000" stroke-width="1"/>
<polygon points="608.50,299.50 627.00,299.50 636.00,304.50 627.00,308.50 608.50,308.50" fill="none" stroke="#ff0000" stroke-width="1"/>
<line x1="636.0" y1="304.5" x2="829.0" y2="304.5" stroke="#800040" stroke-width="1"/>
<line x1="829.0" y1="313.5" x2="851.9" y2="313.5" stroke="#ff0000" stroke-width="1"/>
<circle cx="854.4" cy="313.12960000000004" r="2.5" fill="none" stroke="#ff0000" stroke-width="1"/>
<line x1="829.0" y1="322.5" x2="851.9" y2="322.5" stroke="#ff0000" stroke-width="1"/>
<circle cx="854.4" cy="322.3442" r="2.5" fill="none" stroke="#ff0000" stroke-width="1"/>
<line x1="825.8" y1="319.3" x2="832.2" y2="325.7" stroke="#8a5a2c" stroke-width="0.9"/>
<line x1="825.8" y1="325.7" x2="832.2" y2="319.3" stroke="#8a5a2c" stroke-width="0.9"/>
<line x1="829.0" y1="331.5" x2="851.9" y2="331.5" stroke="#ff0000" stroke-width="1"/>
<circle cx="854.4" cy="331.5588" r="2.5" fill="none" stroke="#ff0000" stroke-width="1"/>
<line x1="825.8" y1="328.3" x2="832.2" y2="334.7" stroke="#8a5a2c" stroke-width="0.9"/>
<line x1="825.8" y1="334.7" x2="832.2" y2="328.3" stroke="#8a5a2c" stroke-width="0.9"/>
<line x1="829.0" y1="340.5" x2="851.9" y2="340.5" stroke="#ff0000" stroke-width="1"/>
<circle cx="854.4" cy="340.77340000000004" r="2.5" fill="none" stroke="#ff0000" stroke-width="1"/>
<line x1="825.8" y1="337.3" x2="832.2" y2="343.7" stroke="#8a5a2c" stroke-width="0.9"/>
<line x1="825.8" y1="343.7" x2="832.2" y2="337.3" stroke="#8a5a2c" stroke-width="0.9"/>
<line x1="829.0" y1="350.5" x2="857.5" y2="350.5" stroke="#ff0000" stroke-width="1"/>
<polygon points="636.50,345.50 617.50,345.50 608.50,350.50 617.50,354.50 636.50,354.50" fill="none" stroke="#ff0000" stroke-width="1"/>
<line x1="636.5" y1="350.5" x2="681.8" y2="350.5" stroke="#800040" stroke-width="1"/>
<line x1="681.8" y1="350.5" x2="691.3" y2="350.5" stroke="#ff0000" stroke-width="1"/>
<polyline points="691.30,350.50 694.00,347.40 699.50,352.80 705.00,347.40 710.40,352.80 715.90,347.40 718.80,350.50" fill="none" stroke="#0000ff" stroke-width="1.3"/>
<line x1="718.8" y1="350.5" x2="728.1999999999999" y2="350.5" stroke="#ff0000" stroke-width="1"/>
<line x1="728.1999999999999" y1="350.5" x2="829.0" y2="350.5" stroke="#800040" stroke-width="1"/>
<line x1="829.0" y1="359.5" x2="857.5" y2="359.5" stroke="#ff0000" stroke-width="1"/>
<polygon points="608.50,359.50 617.50,354.50 626.80,354.50 635.80,359.50 626.80,363.50 617.50,363.50" fill="none" stroke="#ff0000" stroke-width="1"/>
<line x1="635.8" y1="359.5" x2="829.0" y2="359.5" stroke="#800040" stroke-width="1"/>
<line x1="829.0" y1="368.5" x2="857.5" y2="368.5" stroke="#ff0000" stroke-width="1"/>
<polygon points="608.50,368.50 617.50,363.50 626.80,363.50 635.80,368.50 626.80,373.50 617.50,373.50" fill="none" stroke="#ff0000" stroke-width="1"/>
<line x1="635.8" y1="368.5" x2="829.0" y2="368.5" stroke="#800040" stroke-width="1"/>
<line x1="829.0" y1="377.5" x2="857.5" y2="377.5" stroke="#ff0000" stroke-width="1"/>
<polygon points="608.50,377.50 617.50,373.50 626.80,373.50 635.80,377.50 626.80,382.50 617.50,382.50" fill="none" stroke="#ff0000" stroke-width="1"/>
<line x1="635.8" y1="377.5" x2="829.0" y2="377.5" stroke="#800040" stroke-width="1"/>
<line x1="829.0" y1="387.5" x2="857.5" y2="387.5" stroke="#ff0000" stroke-width="1"/>
<polygon points="608.50,387.50 617.50,382.50 626.80,382.50 635.80,387.50 626.80,391.50 617.50,391.50" fill="none" stroke="#ff0000" stroke-width="1"/>
<line x1="635.8" y1="387.5" x2="829.0" y2="387.5" stroke="#800040" stroke-width="1"/>
<line x1="829.0" y1="396.5" x2="851.9" y2="396.5" stroke="#ff0000" stroke-width="1"/>
<circle cx="854.4" cy="396.06100000000004" r="2.5" fill="none" stroke="#ff0000" stroke-width="1"/>
<polygon points="608.50,391.50 627.00,391.50 636.00,396.50 627.00,400.50 608.50,400.50" fill="none" stroke="#ff0000" stroke-width="1"/>
<line x1="636.0" y1="396.5" x2="829.0" y2="396.5" stroke="#800040" stroke-width="1"/>
<line x1="829.0" y1="405.5" x2="851.9" y2="405.5" stroke="#ff0000" stroke-width="1"/>
<circle cx="854.4" cy="405.27560000000005" r="2.5" fill="none" stroke="#ff0000" stroke-width="1"/>
<line x1="718.8" y1="405.5" x2="829.0" y2="405.5" stroke="#800040" stroke-width="1"/>
<line x1="829.0" y1="414.5" x2="851.9" y2="414.5" stroke="#ff0000" stroke-width="1"/>
<circle cx="854.4" cy="414.4902" r="2.5" fill="none" stroke="#ff0000" stroke-width="1"/>
<circle cx="718.7" cy="414.5" r="4" fill="#0000ff" stroke="none" stroke-width="0"/>
<line x1="718.7" y1="414.5" x2="727.9" y2="414.5" stroke="#0000ff" stroke-width="1"/>
<line x1="727.9" y1="414.5" x2="737.9" y2="414.5" stroke="#ff0000" stroke-width="1"/>
<line x1="737.9" y1="414.5" x2="829.0" y2="414.5" stroke="#800040" stroke-width="1"/>
<line x1="829.0" y1="423.5" x2="851.9" y2="423.5" stroke="#ff0000" stroke-width="1"/>
<circle cx="854.4" cy="423.70480000000003" r="2.5" fill="none" stroke="#ff0000" stroke-width="1"/>
<circle cx="718.7" cy="423.5" r="4" fill="#0000ff" stroke="none" stroke-width="0"/>
<line x1="718.7" y1="423.5" x2="727.9" y2="423.5" stroke="#0000ff" stroke-width="1"/>
<line x1="727.9" y1="423.5" x2="737.9" y2="423.5" stroke="#ff0000" stroke-width="1"/>
<line x1="737.9" y1="423.5" x2="829.0" y2="423.5" stroke="#800040" stroke-width="1"/>
<line x1="829.0" y1="433.5" x2="851.9" y2="433.5" stroke="#ff0000" stroke-width="1"/>
<circle cx="854.4" cy="432.91940000000005" r="2.5" fill="none" stroke="#ff0000" stroke-width="1"/>
<polygon points="636.50,428.50 617.50,428.50 608.50,433.50 617.50,437.50 636.50,437.50" fill="none" stroke="#ff0000" stroke-width="1"/>
<line x1="636.5" y1="433.5" x2="681.8" y2="433.5" stroke="#800040" stroke-width="1"/>
<line x1="681.8" y1="433.5" x2="691.3" y2="433.5" stroke="#ff0000" stroke-width="1"/>
<polyline points="691.30,433.50 694.00,430.40 699.50,435.80 705.00,430.40 710.40,435.80 715.90,430.40 718.80,433.50" fill="none" stroke="#0000ff" stroke-width="1.3"/>
<line x1="718.8" y1="433.5" x2="728.1999999999999" y2="433.5" stroke="#ff0000" stroke-width="1"/>
<line x1="728.1999999999999" y1="433.5" x2="829.0" y2="433.5" stroke="#800040" stroke-width="1"/>
<line x1="829.0" y1="442.5" x2="857.5" y2="442.5" stroke="#ff0000" stroke-width="1"/>
<circle cx="718.7" cy="442.5" r="4" fill="#0000ff" stroke="none" stroke-width="0"/>
<line x1="718.7" y1="442.5" x2="727.9" y2="442.5" stroke="#0000ff" stroke-width="1"/>
<line x1="727.9" y1="442.5" x2="737.9" y2="442.5" stroke="#ff0000" stroke-width="1"/>
<line x1="737.9" y1="442.5" x2="829.0" y2="442.5" stroke="#800040" stroke-width="1"/>
<line x1="829.0" y1="451.5" x2="851.9" y2="451.5" stroke="#ff0000" stroke-width="1"/>
<circle cx="854.4" cy="451.34860000000003" r="2.5" fill="none" stroke="#ff0000" stroke-width="1"/>
<line x1="825.8" y1="448.3" x2="832.2" y2="454.7" stroke="#8a5a2c" stroke-width="0.9"/>
<line x1="825.8" y1="454.7" x2="832.2" y2="448.3" stroke="#8a5a2c" stroke-width="0.9"/>
<line x1="829.0" y1="460.5" x2="851.9" y2="460.5" stroke="#ff0000" stroke-width="1"/>
<circle cx="854.4" cy="460.56320000000005" r="2.5" fill="none" stroke="#ff0000" stroke-width="1"/>
<line x1="825.8" y1="457.3" x2="832.2" y2="463.7" stroke="#8a5a2c" stroke-width="0.9"/>
<line x1="825.8" y1="463.7" x2="832.2" y2="457.3" stroke="#8a5a2c" stroke-width="0.9"/>
<line x1="829.0" y1="470.5" x2="851.9" y2="470.5" stroke="#ff0000" stroke-width="1"/>
<circle cx="854.4" cy="469.77780000000007" r="2.5" fill="none" stroke="#ff0000" stroke-width="1"/>
<line x1="825.8" y1="467.3" x2="832.2" y2="473.7" stroke="#8a5a2c" stroke-width="0.9"/>
<line x1="825.8" y1="473.7" x2="832.2" y2="467.3" stroke="#8a5a2c" stroke-width="0.9"/>
<line x1="829.0" y1="479.5" x2="851.9" y2="479.5" stroke="#ff0000" stroke-width="1"/>
<circle cx="854.4" cy="478.99240000000003" r="2.5" fill="none" stroke="#ff0000" stroke-width="1"/>
<circle cx="718.7" cy="479.5" r="4" fill="#0000ff" stroke="none" stroke-width="0"/>
<line x1="718.7" y1="479.5" x2="727.9" y2="479.5" stroke="#0000ff" stroke-width="1"/>
<line x1="727.9" y1="479.5" x2="737.9" y2="479.5" stroke="#ff0000" stroke-width="1"/>
<line x1="737.9" y1="479.5" x2="829.0" y2="479.5" stroke="#800040" stroke-width="1"/>
<line x1="829.0" y1="507.5" x2="851.9" y2="507.5" stroke="#ff0000" stroke-width="1"/>
<circle cx="854.4" cy="506.63620000000003" r="2.5" fill="none" stroke="#ff0000" stroke-width="1"/>
<circle cx="718.7" cy="507.5" r="4" fill="#0000ff" stroke="none" stroke-width="0"/>
<line x1="718.7" y1="507.5" x2="727.9" y2="507.5" stroke="#0000ff" stroke-width="1"/>
<line x1="727.9" y1="507.5" x2="737.9" y2="507.5" stroke="#ff0000" stroke-width="1"/>
<line x1="737.9" y1="507.5" x2="829.0" y2="507.5" stroke="#800040" stroke-width="1"/>
<line x1="829.0" y1="516.5" x2="851.9" y2="516.5" stroke="#ff0000" stroke-width="1"/>
<circle cx="854.4" cy="515.8508" r="2.5" fill="none" stroke="#ff0000" stroke-width="1"/>
<circle cx="718.7" cy="516.5" r="4" fill="#0000ff" stroke="none" stroke-width="0"/>
<line x1="718.7" y1="516.5" x2="727.9" y2="516.5" stroke="#0000ff" stroke-width="1"/>
<line x1="727.9" y1="516.5" x2="737.9" y2="516.5" stroke="#ff0000" stroke-width="1"/>
<line x1="737.9" y1="516.5" x2="746.5" y2="516.5" stroke="#800040" stroke-width="1"/>
<line x1="746.5" y1="516.5" x2="746.5" y2="525.5" stroke="#800040" stroke-width="1"/>
<line x1="825.8" y1="513.3" x2="832.2" y2="519.7" stroke="#8a5a2c" stroke-width="0.9"/>
<line x1="825.8" y1="519.7" x2="832.2" y2="513.3" stroke="#8a5a2c" stroke-width="0.9"/>
<line x1="829.0" y1="525.5" x2="851.9" y2="525.5" stroke="#ff0000" stroke-width="1"/>
<circle cx="854.4" cy="525.0654000000001" r="2.5" fill="none" stroke="#ff0000" stroke-width="1"/>
<polygon points="608.50,520.50 627.00,520.50 636.00,525.50 627.00,529.50 608.50,529.50" fill="none" stroke="#ff0000" stroke-width="1"/>
<line x1="636.0" y1="525.5" x2="829.0" y2="525.5" stroke="#800040" stroke-width="1"/>
<line x1="829.0" y1="534.5" x2="851.9" y2="534.5" stroke="#ff0000" stroke-width="1"/>
<circle cx="854.4" cy="534.28" r="2.5" fill="none" stroke="#ff0000" stroke-width="1"/>
<polygon points="608.50,529.50 627.00,529.50 636.00,534.50 627.00,538.50 608.50,538.50" fill="none" stroke="#ff0000" stroke-width="1"/>
<line x1="636.0" y1="534.5" x2="829.0" y2="534.5" stroke="#800040" stroke-width="1"/>
<line x1="829.0" y1="543.5" x2="851.9" y2="543.5" stroke="#ff0000" stroke-width="1"/>
<circle cx="854.4" cy="543.4946" r="2.5" fill="none" stroke="#ff0000" stroke-width="1"/>
<circle cx="718.7" cy="543.5" r="4" fill="#0000ff" stroke="none" stroke-width="0"/>
<line x1="718.7" y1="543.5" x2="727.9" y2="543.5" stroke="#0000ff" stroke-width="1"/>
<line x1="727.9" y1="543.5" x2="737.9" y2="543.5" stroke="#ff0000" stroke-width="1"/>
<line x1="737.9" y1="543.5" x2="829.0" y2="543.5" stroke="#800040" stroke-width="1"/>
<line x1="829.0" y1="553.5" x2="851.9" y2="553.5" stroke="#ff0000" stroke-width="1"/>
<circle cx="854.4" cy="552.7092" r="2.5" fill="none" stroke="#ff0000" stroke-width="1"/>
<circle cx="718.7" cy="553.5" r="4" fill="#0000ff" stroke="none" stroke-width="0"/>
<line x1="718.7" y1="553.5" x2="727.9" y2="553.5" stroke="#0000ff" stroke-width="1"/>
<line x1="727.9" y1="553.5" x2="737.9" y2="553.5" stroke="#ff0000" stroke-width="1"/>
<line x1="737.9" y1="553.5" x2="829.0" y2="553.5" stroke="#800040" stroke-width="1"/>
<line x1="829.0" y1="562.5" x2="851.9" y2="562.5" stroke="#ff0000" stroke-width="1"/>
<circle cx="854.4" cy="561.9238" r="2.5" fill="none" stroke="#ff0000" stroke-width="1"/>
<circle cx="718.7" cy="562.5" r="4" fill="#0000ff" stroke="none" stroke-width="0"/>
<line x1="718.7" y1="562.5" x2="727.9" y2="562.5" stroke="#0000ff" stroke-width="1"/>
<line x1="727.9" y1="562.5" x2="737.9" y2="562.5" stroke="#ff0000" stroke-width="1"/>
<line x1="737.9" y1="562.5" x2="829.0" y2="562.5" stroke="#800040" stroke-width="1"/>
<line x1="829.0" y1="571.5" x2="851.9" y2="571.5" stroke="#ff0000" stroke-width="1"/>
<circle cx="854.4" cy="571.1384" r="2.5" fill="none" stroke="#ff0000" stroke-width="1"/>
<circle cx="718.7" cy="571.5" r="4" fill="#0000ff" stroke="none" stroke-width="0"/>
<line x1="718.7" y1="571.5" x2="727.9" y2="571.5" stroke="#0000ff" stroke-width="1"/>
<line x1="727.9" y1="571.5" x2="737.9" y2="571.5" stroke="#ff0000" stroke-width="1"/>
<line x1="737.9" y1="571.5" x2="829.0" y2="571.5" stroke="#800040" stroke-width="1"/>
<line x1="829.0" y1="608.5" x2="857.5" y2="608.5" stroke="#ff0000" stroke-width="1"/>
<line x1="645.5" y1="608.5" x2="681.8" y2="608.5" stroke="#800040" stroke-width="1"/>
<line x1="681.8" y1="608.5" x2="691.6999999999999" y2="608.5" stroke="#ff0000" stroke-width="1"/>
<polyline points="691.70,608.50 693.70,610.10 697.30,606.40 700.90,610.10 704.50,606.40 708.10,610.10 710.10,608.50" fill="none" stroke="#0000ff" stroke-width="1.3"/>
<line x1="710.0999999999999" y1="608.5" x2="719.9999999999999" y2="608.5" stroke="#ff0000" stroke-width="1"/>
<line x1="719.9999999999999" y1="608.5" x2="829.0" y2="608.5" stroke="#800040" stroke-width="1"/>
<line x1="829.0" y1="617.5" x2="857.5" y2="617.5" stroke="#ff0000" stroke-width="1"/>
<line x1="737.5" y1="617.5" x2="829.0" y2="617.5" stroke="#800040" stroke-width="1"/>
<line x1="829.0" y1="626.5" x2="857.5" y2="626.5" stroke="#ff0000" stroke-width="1"/>
<line x1="645.5" y1="626.5" x2="681.8" y2="626.5" stroke="#800040" stroke-width="1"/>
<line x1="681.8" y1="626.5" x2="691.6999999999999" y2="626.5" stroke="#ff0000" stroke-width="1"/>
<polyline points="691.70,626.50 693.70,628.10 697.30,624.40 700.90,628.10 704.50,624.40 708.10,628.10 710.10,626.50" fill="none" stroke="#0000ff" stroke-width="1.3"/>
<line x1="710.0999999999999" y1="626.5" x2="719.9999999999999" y2="626.5" stroke="#ff0000" stroke-width="1"/>
<line x1="719.9999999999999" y1="626.5" x2="829.0" y2="626.5" stroke="#800040" stroke-width="1"/>
<line x1="829.0" y1="635.5" x2="857.5" y2="635.5" stroke="#ff0000" stroke-width="1"/>
<line x1="645.5" y1="635.5" x2="681.8" y2="635.5" stroke="#800040" stroke-width="1"/>
<line x1="681.8" y1="635.5" x2="691.6999999999999" y2="635.5" stroke="#ff0000" stroke-width="1"/>
<polyline points="691.70,635.50 693.70,637.10 697.30,633.40 700.90,637.10 704.50,633.40 708.10,637.10 710.10,635.50" fill="none" stroke="#0000ff" stroke-width="1.3"/>
<line x1="710.0999999999999" y1="635.5" x2="719.9999999999999" y2="635.5" stroke="#ff0000" stroke-width="1"/>
<line x1="719.9999999999999" y1="635.5" x2="829.0" y2="635.5" stroke="#800040" stroke-width="1"/>
<line x1="829.0" y1="645.5" x2="857.5" y2="645.5" stroke="#ff0000" stroke-width="1"/>
<line x1="645.5" y1="645.5" x2="681.8" y2="645.5" stroke="#800040" stroke-width="1"/>
<line x1="681.8" y1="645.5" x2="691.6999999999999" y2="645.5" stroke="#ff0000" stroke-width="1"/>
<polyline points="691.70,645.50 693.70,647.10 697.30,643.40 700.90,647.10 704.50,643.40 708.10,647.10 710.10,645.50" fill="none" stroke="#0000ff" stroke-width="1.3"/>
<line x1="710.0999999999999" y1="645.5" x2="719.9999999999999" y2="645.5" stroke="#ff0000" stroke-width="1"/>
<line x1="719.9999999999999" y1="645.5" x2="829.0" y2="645.5" stroke="#800040" stroke-width="1"/>
<line x1="829.0" y1="654.5" x2="857.5" y2="654.5" stroke="#ff0000" stroke-width="1"/>
<line x1="645.5" y1="654.5" x2="681.8" y2="654.5" stroke="#800040" stroke-width="1"/>
<line x1="681.8" y1="654.5" x2="691.6999999999999" y2="654.5" stroke="#ff0000" stroke-width="1"/>
<polyline points="691.70,654.50 693.70,656.10 697.30,652.40 700.90,656.10 704.50,652.40 708.10,656.10 710.10,654.50" fill="none" stroke="#0000ff" stroke-width="1.3"/>
<line x1="710.0999999999999" y1="654.5" x2="719.9999999999999" y2="654.5" stroke="#ff0000" stroke-width="1"/>
<line x1="719.9999999999999" y1="654.5" x2="829.0" y2="654.5" stroke="#800040" stroke-width="1"/>
<line x1="829.0" y1="663.5" x2="857.5" y2="663.5" stroke="#ff0000" stroke-width="1"/>
<line x1="737.5" y1="663.5" x2="829.0" y2="663.5" stroke="#800040" stroke-width="1"/>
<line x1="829.0" y1="672.5" x2="851.9" y2="672.5" stroke="#ff0000" stroke-width="1"/>
<circle cx="854.4" cy="672.499" r="2.5" fill="none" stroke="#ff0000" stroke-width="1"/>
<line x1="737.5" y1="672.5" x2="829.0" y2="672.5" stroke="#800040" stroke-width="1"/>
<line x1="829.0" y1="700.5" x2="857.5" y2="700.5" stroke="#ff0000" stroke-width="1"/>
<circle cx="718.7" cy="700.5" r="4" fill="#0000ff" stroke="none" stroke-width="0"/>
<line x1="718.7" y1="700.5" x2="727.9" y2="700.5" stroke="#0000ff" stroke-width="1"/>
<line x1="727.9" y1="700.5" x2="737.9" y2="700.5" stroke="#ff0000" stroke-width="1"/>
<line x1="737.9" y1="700.5" x2="829.0" y2="700.5" stroke="#800040" stroke-width="1"/>
<line x1="829.0" y1="709.5" x2="857.5" y2="709.5" stroke="#ff0000" stroke-width="1"/>
<circle cx="718.7" cy="709.5" r="4" fill="#0000ff" stroke="none" stroke-width="0"/>
<line x1="718.7" y1="709.5" x2="727.9" y2="709.5" stroke="#0000ff" stroke-width="1"/>
<line x1="727.9" y1="709.5" x2="737.9" y2="709.5" stroke="#ff0000" stroke-width="1"/>
<line x1="737.9" y1="709.5" x2="829.0" y2="709.5" stroke="#800040" stroke-width="1"/>
<line x1="829.0" y1="718.5" x2="857.5" y2="718.5" stroke="#ff0000" stroke-width="1"/>
<line x1="825.8" y1="715.3" x2="832.2" y2="721.7" stroke="#8a5a2c" stroke-width="0.9"/>
<line x1="825.8" y1="721.7" x2="832.2" y2="715.3" stroke="#8a5a2c" stroke-width="0.9"/>
<line x1="829.0" y1="746.5" x2="857.5" y2="746.5" stroke="#ff0000" stroke-width="1"/>
<polygon points="709.50,741.50 728.50,741.50 737.50,746.50 728.50,751.50 709.50,751.50" fill="none" stroke="#ff0000" stroke-width="1"/>
<line x1="737.5" y1="746.5" x2="829.0" y2="746.5" stroke="#800040" stroke-width="1"/>
<line x1="829.0" y1="755.5" x2="857.5" y2="755.5" stroke="#ff0000" stroke-width="1"/>
<line x1="825.8" y1="752.3" x2="832.2" y2="758.7" stroke="#8a5a2c" stroke-width="0.9"/>
<line x1="825.8" y1="758.7" x2="832.2" y2="752.3" stroke="#8a5a2c" stroke-width="0.9"/>
<line x1="829.0" y1="765.5" x2="857.5" y2="765.5" stroke="#ff0000" stroke-width="1"/>
<polygon points="728.50,760.50 709.20,760.50 700.20,765.50 709.20,769.50 728.50,769.50" fill="none" stroke="#ff0000" stroke-width="1"/>
<line x1="728.5" y1="765.5" x2="829.0" y2="765.5" stroke="#800040" stroke-width="1"/>
<line x1="829.0" y1="774.5" x2="857.5" y2="774.5" stroke="#ff0000" stroke-width="1"/>
<polygon points="728.50,769.50 709.20,769.50 700.20,774.50 709.20,778.50 728.50,778.50" fill="none" stroke="#ff0000" stroke-width="1"/>
<line x1="728.5" y1="774.5" x2="829.0" y2="774.5" stroke="#800040" stroke-width="1"/>
<line x1="829.0" y1="801.5" x2="857.5" y2="801.5" stroke="#ff0000" stroke-width="1"/>
<line x1="825.8" y1="798.3" x2="832.2" y2="804.7" stroke="#8a5a2c" stroke-width="0.9"/>
<line x1="825.8" y1="804.7" x2="832.2" y2="798.3" stroke="#8a5a2c" stroke-width="0.9"/>
<line x1="829.0" y1="811.5" x2="857.5" y2="811.5" stroke="#ff0000" stroke-width="1"/>
<line x1="825.8" y1="808.3" x2="832.2" y2="814.7" stroke="#8a5a2c" stroke-width="0.9"/>
<line x1="825.8" y1="814.7" x2="832.2" y2="808.3" stroke="#8a5a2c" stroke-width="0.9"/>
<line x1="829.0" y1="820.5" x2="857.5" y2="820.5" stroke="#ff0000" stroke-width="1"/>
<line x1="825.8" y1="817.3" x2="832.2" y2="823.7" stroke="#8a5a2c" stroke-width="0.9"/>
<line x1="825.8" y1="823.7" x2="832.2" y2="817.3" stroke="#8a5a2c" stroke-width="0.9"/>
<line x1="829.0" y1="829.5" x2="857.5" y2="829.5" stroke="#ff0000" stroke-width="1"/>
<line x1="825.8" y1="826.3" x2="832.2" y2="832.7" stroke="#8a5a2c" stroke-width="0.9"/>
<line x1="825.8" y1="832.7" x2="832.2" y2="826.3" stroke="#8a5a2c" stroke-width="0.9"/>
<line x1="829.0" y1="838.5" x2="857.5" y2="838.5" stroke="#ff0000" stroke-width="1"/>
<line x1="825.8" y1="835.3" x2="832.2" y2="841.7" stroke="#8a5a2c" stroke-width="0.9"/>
<line x1="825.8" y1="841.7" x2="832.2" y2="835.3" stroke="#8a5a2c" stroke-width="0.9"/>
<line x1="829.0" y1="847.5" x2="857.5" y2="847.5" stroke="#ff0000" stroke-width="1"/>
<line x1="825.8" y1="844.3" x2="832.2" y2="850.7" stroke="#8a5a2c" stroke-width="0.9"/>
<line x1="825.8" y1="850.7" x2="832.2" y2="844.3" stroke="#8a5a2c" stroke-width="0.9"/>
<line x1="829.0" y1="857.5" x2="857.5" y2="857.5" stroke="#ff0000" stroke-width="1"/>
<line x1="825.8" y1="854.3" x2="832.2" y2="860.7" stroke="#8a5a2c" stroke-width="0.9"/>
<line x1="825.8" y1="860.7" x2="832.2" y2="854.3" stroke="#8a5a2c" stroke-width="0.9"/>
<line x1="829.0" y1="866.5" x2="857.5" y2="866.5" stroke="#ff0000" stroke-width="1"/>
<line x1="825.8" y1="863.3" x2="832.2" y2="869.7" stroke="#8a5a2c" stroke-width="0.9"/>
<line x1="825.8" y1="869.7" x2="832.2" y2="863.3" stroke="#8a5a2c" stroke-width="0.9"/>
<line x1="829.0" y1="875.5" x2="857.5" y2="875.5" stroke="#ff0000" stroke-width="1"/>
<line x1="825.8" y1="872.3" x2="832.2" y2="878.7" stroke="#8a5a2c" stroke-width="0.9"/>
<line x1="825.8" y1="878.7" x2="832.2" y2="872.3" stroke="#8a5a2c" stroke-width="0.9"/>
<line x1="829.0" y1="884.5" x2="857.5" y2="884.5" stroke="#ff0000" stroke-width="1"/>
<line x1="825.8" y1="881.3" x2="832.2" y2="887.7" stroke="#8a5a2c" stroke-width="0.9"/>
<line x1="825.8" y1="887.7" x2="832.2" y2="881.3" stroke="#8a5a2c" stroke-width="0.9"/>
<line x1="829.0" y1="893.5" x2="857.5" y2="893.5" stroke="#ff0000" stroke-width="1"/>
<line x1="825.8" y1="890.3" x2="832.2" y2="896.7" stroke="#8a5a2c" stroke-width="0.9"/>
<line x1="825.8" y1="896.7" x2="832.2" y2="890.3" stroke="#8a5a2c" stroke-width="0.9"/>
<line x1="829.0" y1="903.5" x2="857.5" y2="903.5" stroke="#ff0000" stroke-width="1"/>
<line x1="825.8" y1="900.3" x2="832.2" y2="906.7" stroke="#8a5a2c" stroke-width="0.9"/>
<line x1="825.8" y1="906.7" x2="832.2" y2="900.3" stroke="#8a5a2c" stroke-width="0.9"/>
<line x1="829.0" y1="912.5" x2="857.5" y2="912.5" stroke="#ff0000" stroke-width="1"/>
<line x1="825.8" y1="909.3" x2="832.2" y2="915.7" stroke="#8a5a2c" stroke-width="0.9"/>
<line x1="825.8" y1="915.7" x2="832.2" y2="909.3" stroke="#8a5a2c" stroke-width="0.9"/>
<line x1="829.0" y1="921.5" x2="857.5" y2="921.5" stroke="#ff0000" stroke-width="1"/>
<line x1="825.8" y1="918.3" x2="832.2" y2="924.7" stroke="#8a5a2c" stroke-width="0.9"/>
<line x1="825.8" y1="924.7" x2="832.2" y2="918.3" stroke="#8a5a2c" stroke-width="0.9"/>
<line x1="829.0" y1="930.5" x2="857.5" y2="930.5" stroke="#ff0000" stroke-width="1"/>
<line x1="825.8" y1="927.3" x2="832.2" y2="933.7" stroke="#8a5a2c" stroke-width="0.9"/>
<line x1="825.8" y1="933.7" x2="832.2" y2="927.3" stroke="#8a5a2c" stroke-width="0.9"/>
<line x1="829.0" y1="939.5" x2="857.5" y2="939.5" stroke="#ff0000" stroke-width="1"/>
<line x1="825.8" y1="936.3" x2="832.2" y2="942.7" stroke="#8a5a2c" stroke-width="0.9"/>
<line x1="825.8" y1="942.7" x2="832.2" y2="936.3" stroke="#8a5a2c" stroke-width="0.9"/>
<line x1="829.0" y1="949.5" x2="857.5" y2="949.5" stroke="#ff0000" stroke-width="1"/>
<line x1="825.8" y1="946.3" x2="832.2" y2="952.7" stroke="#8a5a2c" stroke-width="0.9"/>
<line x1="825.8" y1="952.7" x2="832.2" y2="946.3" stroke="#8a5a2c" stroke-width="0.9"/>
<line x1="829.0" y1="958.5" x2="857.5" y2="958.5" stroke="#ff0000" stroke-width="1"/>
<line x1="825.8" y1="955.3" x2="832.2" y2="961.7" stroke="#8a5a2c" stroke-width="0.9"/>
<line x1="825.8" y1="961.7" x2="832.2" y2="955.3" stroke="#8a5a2c" stroke-width="0.9"/>
<line x1="765.5" y1="230.5" x2="765.5" y2="239.5" stroke="#800040" stroke-width="1"/>
<line x1="645.5" y1="230.6" x2="645.5" y2="248.4" stroke="#ff0000" stroke-width="1"/>
<line x1="645.5" y1="239.5" x2="645.5" y2="239.5" stroke="#ff0000" stroke-width="1"/>
<line x1="642.5" y1="232.7" x2="642.5" y2="246.3" stroke="#ff0000" stroke-width="1"/>
<line x1="639.5" y1="235.75" x2="639.5" y2="243.25" stroke="#ff0000" stroke-width="1"/>
<line x1="637.5" y1="238.1" x2="637.5" y2="240.9" stroke="#ff0000" stroke-width="1"/>
<line x1="645.6" y1="239.5" x2="681.9" y2="239.5" stroke="#800040" stroke-width="1"/>
<line x1="681.9" y1="239.5" x2="692.1999999999999" y2="239.5" stroke="#ff0000" stroke-width="1"/>
<line x1="692.1999999999999" y1="239.5" x2="694.4" y2="239.5" stroke="#0000ff" stroke-width="1"/>
<line x1="694.4" y1="233.5" x2="694.4" y2="245.5" stroke="#0000ff" stroke-width="1"/>
<line x1="697.3" y1="233.5" x2="697.3" y2="245.5" stroke="#0000ff" stroke-width="1"/>
<line x1="697.3" y1="239.5" x2="699.5" y2="239.5" stroke="#0000ff" stroke-width="1"/>
<line x1="699.5" y1="239.5" x2="708.9" y2="239.5" stroke="#ff0000" stroke-width="1"/>
<line x1="708.9" y1="239.5" x2="765.5" y2="239.5" stroke="#800040" stroke-width="1"/>
<line x1="645.5" y1="608.5" x2="645.5" y2="672.5" stroke="#800040" stroke-width="1"/>
<line x1="636.0" y1="672.5" x2="655.0" y2="672.5" stroke="#ff0000" stroke-width="1"/>
<line x1="638.8" y1="675.5" x2="652.2" y2="675.5" stroke="#ff0000" stroke-width="1"/>
<line x1="641.5" y1="678.5" x2="649.5" y2="678.5" stroke="#ff0000" stroke-width="1"/>
<line x1="644.3" y1="681.5" x2="646.7" y2="681.5" stroke="#ff0000" stroke-width="1"/>
<rect x="857.5" y="64.5" width="322.0" height="922.0" fill="none" stroke="#0000ff" stroke-width="1"/>
<line x1="1179.5" y1="73.5" x2="1207.2" y2="73.5" stroke="#ff0000" stroke-width="1"/>
<line x1="1204.0" y1="70.3" x2="1210.4" y2="76.7" stroke="#8a5a2c" stroke-width="0.9"/>
<line x1="1204.0" y1="76.7" x2="1210.4" y2="70.3" stroke="#8a5a2c" stroke-width="0.9"/>
<polyline points="1179.50,70.80 1175.50,73.50 1179.50,76.20" fill="none" stroke="#0000ff" stroke-width="1.3"/>
<line x1="1179.5" y1="92.5" x2="1207.2" y2="92.5" stroke="#ff0000" stroke-width="1"/>
<line x1="1207.2" y1="92.5" x2="1317.8" y2="92.5" stroke="#800040" stroke-width="1"/>
<line x1="1317.8" y1="92.5" x2="1327.2" y2="92.5" stroke="#ff0000" stroke-width="1"/>
<polyline points="1327.20,92.50 1328.80,90.50 1332.50,94.30 1336.30,90.50 1339.90,94.30 1343.70,90.50 1345.40,92.50" fill="none" stroke="#0000ff" stroke-width="1.3"/>
<line x1="1345.4" y1="92.5" x2="1354.5" y2="92.5" stroke="#ff0000" stroke-width="1"/>
<line x1="1354.5" y1="92.5" x2="1391.5" y2="92.5" stroke="#800040" stroke-width="1"/>
<line x1="1391.5" y1="82.7" x2="1391.5" y2="102.3" stroke="#ff0000" stroke-width="1"/>
<line x1="1394.5" y1="85.7" x2="1394.5" y2="99.3" stroke="#ff0000" stroke-width="1"/>
<line x1="1397.5" y1="88.5" x2="1397.5" y2="96.5" stroke="#ff0000" stroke-width="1"/>
<line x1="1400.5" y1="91.4" x2="1400.5" y2="93.6" stroke="#ff0000" stroke-width="1"/>
<line x1="1179.5" y1="110.5" x2="1207.2" y2="110.5" stroke="#ff0000" stroke-width="1"/>
<line x1="1204.0" y1="107.3" x2="1210.4" y2="113.7" stroke="#8a5a2c" stroke-width="0.9"/>
<line x1="1204.0" y1="113.7" x2="1210.4" y2="107.3" stroke="#8a5a2c" stroke-width="0.9"/>
<line x1="1179.5" y1="119.5" x2="1207.2" y2="119.5" stroke="#ff0000" stroke-width="1"/>
<line x1="1204.0" y1="116.3" x2="1210.4" y2="122.7" stroke="#8a5a2c" stroke-width="0.9"/>
<line x1="1204.0" y1="122.7" x2="1210.4" y2="116.3" stroke="#8a5a2c" stroke-width="0.9"/>
<line x1="1179.5" y1="138.5" x2="1207.2" y2="138.5" stroke="#ff0000" stroke-width="1"/>
<line x1="1204.0" y1="135.3" x2="1210.4" y2="141.7" stroke="#8a5a2c" stroke-width="0.9"/>
<line x1="1204.0" y1="141.7" x2="1210.4" y2="135.3" stroke="#8a5a2c" stroke-width="0.9"/>
<line x1="1179.5" y1="147.5" x2="1207.2" y2="147.5" stroke="#ff0000" stroke-width="1"/>
<line x1="1204.0" y1="144.3" x2="1210.4" y2="150.7" stroke="#8a5a2c" stroke-width="0.9"/>
<line x1="1204.0" y1="150.7" x2="1210.4" y2="144.3" stroke="#8a5a2c" stroke-width="0.9"/>
<line x1="1179.5" y1="165.5" x2="1207.2" y2="165.5" stroke="#ff0000" stroke-width="1"/>
<line x1="1204.0" y1="162.3" x2="1210.4" y2="168.7" stroke="#8a5a2c" stroke-width="0.9"/>
<line x1="1204.0" y1="168.7" x2="1210.4" y2="162.3" stroke="#8a5a2c" stroke-width="0.9"/>
<line x1="1179.5" y1="175.5" x2="1207.2" y2="175.5" stroke="#ff0000" stroke-width="1"/>
<line x1="1204.0" y1="172.3" x2="1210.4" y2="178.7" stroke="#8a5a2c" stroke-width="0.9"/>
<line x1="1204.0" y1="178.7" x2="1210.4" y2="172.3" stroke="#8a5a2c" stroke-width="0.9"/>
<line x1="1179.5" y1="248.5" x2="1207.2" y2="248.5" stroke="#ff0000" stroke-width="1"/>
<line x1="1204.0" y1="245.3" x2="1210.4" y2="251.7" stroke="#8a5a2c" stroke-width="0.9"/>
<line x1="1204.0" y1="251.7" x2="1210.4" y2="245.3" stroke="#8a5a2c" stroke-width="0.9"/>
<line x1="1179.5" y1="258.5" x2="1207.2" y2="258.5" stroke="#ff0000" stroke-width="1"/>
<line x1="1204.0" y1="255.3" x2="1210.4" y2="261.7" stroke="#8a5a2c" stroke-width="0.9"/>
<line x1="1204.0" y1="261.7" x2="1210.4" y2="255.3" stroke="#8a5a2c" stroke-width="0.9"/>
<line x1="1179.5" y1="276.5" x2="1207.2" y2="276.5" stroke="#ff0000" stroke-width="1"/>
<line x1="1204.0" y1="273.3" x2="1210.4" y2="279.7" stroke="#8a5a2c" stroke-width="0.9"/>
<line x1="1204.0" y1="279.7" x2="1210.4" y2="273.3" stroke="#8a5a2c" stroke-width="0.9"/>
<line x1="1179.5" y1="285.5" x2="1207.2" y2="285.5" stroke="#ff0000" stroke-width="1"/>
<line x1="1204.0" y1="282.3" x2="1210.4" y2="288.7" stroke="#8a5a2c" stroke-width="0.9"/>
<line x1="1204.0" y1="288.7" x2="1210.4" y2="282.3" stroke="#8a5a2c" stroke-width="0.9"/>
<line x1="1179.5" y1="359.5" x2="1207.2" y2="359.5" stroke="#ff0000" stroke-width="1"/>
<line x1="1204.0" y1="356.3" x2="1210.4" y2="362.7" stroke="#8a5a2c" stroke-width="0.9"/>
<line x1="1204.0" y1="362.7" x2="1210.4" y2="356.3" stroke="#8a5a2c" stroke-width="0.9"/>
<line x1="1179.5" y1="368.5" x2="1207.2" y2="368.5" stroke="#ff0000" stroke-width="1"/>
<line x1="1204.0" y1="365.3" x2="1210.4" y2="371.7" stroke="#8a5a2c" stroke-width="0.9"/>
<line x1="1204.0" y1="371.7" x2="1210.4" y2="365.3" stroke="#8a5a2c" stroke-width="0.9"/>
<line x1="1179.5" y1="387.5" x2="1207.2" y2="387.5" stroke="#ff0000" stroke-width="1"/>
<line x1="1204.0" y1="384.3" x2="1210.4" y2="390.7" stroke="#8a5a2c" stroke-width="0.9"/>
<line x1="1204.0" y1="390.7" x2="1210.4" y2="384.3" stroke="#8a5a2c" stroke-width="0.9"/>
<line x1="1179.5" y1="396.5" x2="1207.2" y2="396.5" stroke="#ff0000" stroke-width="1"/>
<line x1="1204.0" y1="393.3" x2="1210.4" y2="399.7" stroke="#8a5a2c" stroke-width="0.9"/>
<line x1="1204.0" y1="399.7" x2="1210.4" y2="393.3" stroke="#8a5a2c" stroke-width="0.9"/>
<line x1="1179.5" y1="414.5" x2="1207.2" y2="414.5" stroke="#ff0000" stroke-width="1"/>
<line x1="1204.0" y1="411.3" x2="1210.4" y2="417.7" stroke="#8a5a2c" stroke-width="0.9"/>
<line x1="1204.0" y1="417.7" x2="1210.4" y2="411.3" stroke="#8a5a2c" stroke-width="0.9"/>
<line x1="1179.5" y1="423.5" x2="1207.2" y2="423.5" stroke="#ff0000" stroke-width="1"/>
<line x1="1204.0" y1="420.3" x2="1210.4" y2="426.7" stroke="#8a5a2c" stroke-width="0.9"/>
<line x1="1204.0" y1="426.7" x2="1210.4" y2="420.3" stroke="#8a5a2c" stroke-width="0.9"/>
<line x1="1179.5" y1="442.5" x2="1207.2" y2="442.5" stroke="#ff0000" stroke-width="1"/>
<line x1="1204.0" y1="439.3" x2="1210.4" y2="445.7" stroke="#8a5a2c" stroke-width="0.9"/>
<line x1="1204.0" y1="445.7" x2="1210.4" y2="439.3" stroke="#8a5a2c" stroke-width="0.9"/>
<line x1="1179.5" y1="451.5" x2="1207.2" y2="451.5" stroke="#ff0000" stroke-width="1"/>
<line x1="1204.0" y1="448.3" x2="1210.4" y2="454.7" stroke="#8a5a2c" stroke-width="0.9"/>
<line x1="1204.0" y1="454.7" x2="1210.4" y2="448.3" stroke="#8a5a2c" stroke-width="0.9"/>
<line x1="1179.5" y1="497.5" x2="1207.2" y2="497.5" stroke="#ff0000" stroke-width="1"/>
<line x1="1204.0" y1="494.3" x2="1210.4" y2="500.7" stroke="#8a5a2c" stroke-width="0.9"/>
<line x1="1204.0" y1="500.7" x2="1210.4" y2="494.3" stroke="#8a5a2c" stroke-width="0.9"/>
<line x1="1179.5" y1="507.5" x2="1207.2" y2="507.5" stroke="#ff0000" stroke-width="1"/>
<line x1="1204.0" y1="504.3" x2="1210.4" y2="510.7" stroke="#8a5a2c" stroke-width="0.9"/>
<line x1="1204.0" y1="510.7" x2="1210.4" y2="504.3" stroke="#8a5a2c" stroke-width="0.9"/>
<line x1="1179.5" y1="580.5" x2="1207.2" y2="580.5" stroke="#ff0000" stroke-width="1"/>
<line x1="1204.0" y1="577.3" x2="1210.4" y2="583.7" stroke="#8a5a2c" stroke-width="0.9"/>
<line x1="1204.0" y1="583.7" x2="1210.4" y2="577.3" stroke="#8a5a2c" stroke-width="0.9"/>
<line x1="1179.5" y1="589.5" x2="1207.2" y2="589.5" stroke="#ff0000" stroke-width="1"/>
<line x1="1204.0" y1="586.3" x2="1210.4" y2="592.7" stroke="#8a5a2c" stroke-width="0.9"/>
<line x1="1204.0" y1="592.7" x2="1210.4" y2="586.3" stroke="#8a5a2c" stroke-width="0.9"/>
<line x1="1179.5" y1="608.5" x2="1207.2" y2="608.5" stroke="#ff0000" stroke-width="1"/>
<line x1="1204.0" y1="605.3" x2="1210.4" y2="611.7" stroke="#8a5a2c" stroke-width="0.9"/>
<line x1="1204.0" y1="611.7" x2="1210.4" y2="605.3" stroke="#8a5a2c" stroke-width="0.9"/>
<line x1="1179.5" y1="617.5" x2="1207.2" y2="617.5" stroke="#ff0000" stroke-width="1"/>
<line x1="1204.0" y1="614.3" x2="1210.4" y2="620.7" stroke="#8a5a2c" stroke-width="0.9"/>
<line x1="1204.0" y1="620.7" x2="1210.4" y2="614.3" stroke="#8a5a2c" stroke-width="0.9"/>
<line x1="1179.5" y1="746.5" x2="1207.2" y2="746.5" stroke="#ff0000" stroke-width="1"/>
<line x1="1204.0" y1="743.3" x2="1210.4" y2="749.7" stroke="#8a5a2c" stroke-width="0.9"/>
<line x1="1204.0" y1="749.7" x2="1210.4" y2="743.3" stroke="#8a5a2c" stroke-width="0.9"/>
<line x1="1179.5" y1="755.5" x2="1207.2" y2="755.5" stroke="#ff0000" stroke-width="1"/>
<line x1="1204.0" y1="752.3" x2="1210.4" y2="758.7" stroke="#8a5a2c" stroke-width="0.9"/>
<line x1="1204.0" y1="758.7" x2="1210.4" y2="752.3" stroke="#8a5a2c" stroke-width="0.9"/>
<line x1="1179.5" y1="774.5" x2="1207.2" y2="774.5" stroke="#ff0000" stroke-width="1"/>
<line x1="1204.0" y1="771.3" x2="1210.4" y2="777.7" stroke="#8a5a2c" stroke-width="0.9"/>
<line x1="1204.0" y1="777.7" x2="1210.4" y2="771.3" stroke="#8a5a2c" stroke-width="0.9"/>
<line x1="1179.5" y1="783.5" x2="1207.2" y2="783.5" stroke="#ff0000" stroke-width="1"/>
<line x1="1204.0" y1="780.3" x2="1210.4" y2="786.7" stroke="#8a5a2c" stroke-width="0.9"/>
<line x1="1204.0" y1="786.7" x2="1210.4" y2="780.3" stroke="#8a5a2c" stroke-width="0.9"/>
<line x1="1179.5" y1="847.5" x2="1207.2" y2="847.5" stroke="#ff0000" stroke-width="1"/>
<line x1="1204.0" y1="844.3" x2="1210.4" y2="850.7" stroke="#8a5a2c" stroke-width="0.9"/>
<line x1="1204.0" y1="850.7" x2="1210.4" y2="844.3" stroke="#8a5a2c" stroke-width="0.9"/>
<line x1="1179.5" y1="857.5" x2="1207.2" y2="857.5" stroke="#ff0000" stroke-width="1"/>
<line x1="1204.0" y1="854.3" x2="1210.4" y2="860.7" stroke="#8a5a2c" stroke-width="0.9"/>
<line x1="1204.0" y1="860.7" x2="1210.4" y2="854.3" stroke="#8a5a2c" stroke-width="0.9"/>
<line x1="1179.5" y1="875.5" x2="1207.2" y2="875.5" stroke="#ff0000" stroke-width="1"/>
<line x1="1204.0" y1="872.3" x2="1210.4" y2="878.7" stroke="#8a5a2c" stroke-width="0.9"/>
<line x1="1204.0" y1="878.7" x2="1210.4" y2="872.3" stroke="#8a5a2c" stroke-width="0.9"/>
<line x1="1179.5" y1="893.5" x2="1207.2" y2="893.5" stroke="#ff0000" stroke-width="1"/>
<line x1="1204.0" y1="890.3" x2="1210.4" y2="896.7" stroke="#8a5a2c" stroke-width="0.9"/>
<line x1="1204.0" y1="896.7" x2="1210.4" y2="890.3" stroke="#8a5a2c" stroke-width="0.9"/>
<line x1="1179.5" y1="903.5" x2="1207.2" y2="903.5" stroke="#ff0000" stroke-width="1"/>
<line x1="1204.0" y1="900.3" x2="1210.4" y2="906.7" stroke="#8a5a2c" stroke-width="0.9"/>
<line x1="1204.0" y1="906.7" x2="1210.4" y2="900.3" stroke="#8a5a2c" stroke-width="0.9"/>
<line x1="1179.5" y1="912.5" x2="1207.2" y2="912.5" stroke="#ff0000" stroke-width="1"/>
<line x1="1204.0" y1="909.3" x2="1210.4" y2="915.7" stroke="#8a5a2c" stroke-width="0.9"/>
<line x1="1204.0" y1="915.7" x2="1210.4" y2="909.3" stroke="#8a5a2c" stroke-width="0.9"/>
<line x1="1179.5" y1="921.5" x2="1207.2" y2="921.5" stroke="#ff0000" stroke-width="1"/>
<line x1="1204.0" y1="918.3" x2="1210.4" y2="924.7" stroke="#8a5a2c" stroke-width="0.9"/>
<line x1="1204.0" y1="924.7" x2="1210.4" y2="918.3" stroke="#8a5a2c" stroke-width="0.9"/>
<line x1="1179.5" y1="930.5" x2="1207.2" y2="930.5" stroke="#ff0000" stroke-width="1"/>
<line x1="1204.0" y1="927.3" x2="1210.4" y2="933.7" stroke="#8a5a2c" stroke-width="0.9"/>
<line x1="1204.0" y1="933.7" x2="1210.4" y2="927.3" stroke="#8a5a2c" stroke-width="0.9"/>
<line x1="1179.5" y1="939.5" x2="1207.2" y2="939.5" stroke="#ff0000" stroke-width="1"/>
<line x1="1204.0" y1="936.3" x2="1210.4" y2="942.7" stroke="#8a5a2c" stroke-width="0.9"/>
<line x1="1204.0" y1="942.7" x2="1210.4" y2="936.3" stroke="#8a5a2c" stroke-width="0.9"/>
<line x1="1179.5" y1="949.5" x2="1207.2" y2="949.5" stroke="#ff0000" stroke-width="1"/>
<line x1="1204.0" y1="946.3" x2="1210.4" y2="952.7" stroke="#8a5a2c" stroke-width="0.9"/>
<line x1="1204.0" y1="952.7" x2="1210.4" y2="946.3" stroke="#8a5a2c" stroke-width="0.9"/>
<line x1="1179.5" y1="958.5" x2="1207.2" y2="958.5" stroke="#ff0000" stroke-width="1"/>
<line x1="1204.0" y1="955.3" x2="1210.4" y2="961.7" stroke="#8a5a2c" stroke-width="0.9"/>
<line x1="1204.0" y1="961.7" x2="1210.4" y2="955.3" stroke="#8a5a2c" stroke-width="0.9"/>
<line x1="1179.5" y1="193.5" x2="1207.2" y2="193.5" stroke="#ff0000" stroke-width="1"/>
<line x1="1207.2" y1="193.5" x2="1317.9" y2="193.5" stroke="#800040" stroke-width="1"/>
<polygon points="1317.90,193.50 1326.90,188.50 1336.70,188.50 1345.70,193.50 1336.70,198.50 1326.90,198.50" fill="none" stroke="#ff0000" stroke-width="1"/>
<line x1="1179.5" y1="202.5" x2="1207.2" y2="202.5" stroke="#ff0000" stroke-width="1"/>
<line x1="1207.2" y1="202.5" x2="1317.9" y2="202.5" stroke="#800040" stroke-width="1"/>
<polygon points="1317.90,202.50 1326.90,198.50 1336.70,198.50 1345.70,202.50 1336.70,207.50 1326.90,207.50" fill="none" stroke="#ff0000" stroke-width="1"/>
<line x1="1179.5" y1="221.5" x2="1207.2" y2="221.5" stroke="#ff0000" stroke-width="1"/>
<line x1="1207.2" y1="221.5" x2="1317.9" y2="221.5" stroke="#800040" stroke-width="1"/>
<polygon points="1317.90,221.50 1326.90,216.50 1336.70,216.50 1345.70,221.50 1336.70,225.50 1326.90,225.50" fill="none" stroke="#ff0000" stroke-width="1"/>
<line x1="1179.5" y1="230.5" x2="1207.2" y2="230.5" stroke="#ff0000" stroke-width="1"/>
<line x1="1207.2" y1="230.5" x2="1317.9" y2="230.5" stroke="#800040" stroke-width="1"/>
<polygon points="1317.90,230.50 1326.90,225.50 1336.70,225.50 1345.70,230.50 1336.70,234.50 1326.90,234.50" fill="none" stroke="#ff0000" stroke-width="1"/>
<line x1="1179.5" y1="470.5" x2="1207.2" y2="470.5" stroke="#ff0000" stroke-width="1"/>
<line x1="1207.2" y1="470.5" x2="1317.9" y2="470.5" stroke="#800040" stroke-width="1"/>
<polygon points="1317.90,470.50 1326.90,465.50 1336.70,465.50 1345.70,470.50 1336.70,474.50 1326.90,474.50" fill="none" stroke="#ff0000" stroke-width="1"/>
<line x1="1179.5" y1="479.5" x2="1207.2" y2="479.5" stroke="#ff0000" stroke-width="1"/>
<line x1="1207.2" y1="479.5" x2="1317.9" y2="479.5" stroke="#800040" stroke-width="1"/>
<polygon points="1317.90,479.50 1326.90,474.50 1336.70,474.50 1345.70,479.50 1336.70,483.50 1326.90,483.50" fill="none" stroke="#ff0000" stroke-width="1"/>
<line x1="1179.5" y1="525.5" x2="1207.2" y2="525.5" stroke="#ff0000" stroke-width="1"/>
<line x1="1207.2" y1="525.5" x2="1317.9" y2="525.5" stroke="#800040" stroke-width="1"/>
<polygon points="1317.90,525.50 1326.90,520.50 1336.70,520.50 1345.70,525.50 1336.70,529.50 1326.90,529.50" fill="none" stroke="#ff0000" stroke-width="1"/>
<line x1="1179.5" y1="534.5" x2="1207.2" y2="534.5" stroke="#ff0000" stroke-width="1"/>
<line x1="1207.2" y1="534.5" x2="1317.9" y2="534.5" stroke="#800040" stroke-width="1"/>
<polygon points="1317.90,534.50 1326.90,529.50 1336.70,529.50 1345.70,534.50 1336.70,538.50 1326.90,538.50" fill="none" stroke="#ff0000" stroke-width="1"/>
<line x1="1179.5" y1="304.5" x2="1207.2" y2="304.5" stroke="#ff0000" stroke-width="1"/>
<line x1="1207.2" y1="304.5" x2="1308.0" y2="304.5" stroke="#800040" stroke-width="1"/>
<polygon points="1308.00,304.50 1317.00,299.50 1327.00,299.50 1336.00,304.50 1327.00,308.50 1317.00,308.50" fill="none" stroke="#ff0000" stroke-width="1"/>
<line x1="1179.5" y1="313.5" x2="1207.2" y2="313.5" stroke="#ff0000" stroke-width="1"/>
<line x1="1207.2" y1="313.5" x2="1308.0" y2="313.5" stroke="#800040" stroke-width="1"/>
<polygon points="1308.00,313.50 1317.00,308.50 1327.00,308.50 1336.00,313.50 1327.00,317.50 1317.00,317.50" fill="none" stroke="#ff0000" stroke-width="1"/>
<line x1="1179.5" y1="331.5" x2="1207.2" y2="331.5" stroke="#ff0000" stroke-width="1"/>
<line x1="1207.2" y1="331.5" x2="1299.4" y2="331.5" stroke="#800040" stroke-width="1"/>
<line x1="1299.4" y1="331.5" x2="1308.8" y2="331.5" stroke="#ff0000" stroke-width="1"/>
<line x1="1308.8" y1="331.5" x2="1317.5" y2="331.5" stroke="#0000ff" stroke-width="1"/>
<circle cx="1317.5" cy="331.5" r="4" fill="#0000ff" stroke="none" stroke-width="0"/>
<line x1="1179.5" y1="340.5" x2="1207.2" y2="340.5" stroke="#ff0000" stroke-width="1"/>
<line x1="1207.2" y1="340.5" x2="1299.4" y2="340.5" stroke="#800040" stroke-width="1"/>
<line x1="1299.4" y1="340.5" x2="1308.8" y2="340.5" stroke="#ff0000" stroke-width="1"/>
<line x1="1308.8" y1="340.5" x2="1317.5" y2="340.5" stroke="#0000ff" stroke-width="1"/>
<circle cx="1317.5" cy="340.5" r="4" fill="#0000ff" stroke="none" stroke-width="0"/>
<line x1="1179.5" y1="635.5" x2="1207.2" y2="635.5" stroke="#ff0000" stroke-width="1"/>
<line x1="1207.2" y1="635.5" x2="1327.2" y2="635.5" stroke="#800040" stroke-width="1"/>
<polygon points="1327.20,635.50 1336.20,631.50 1345.60,631.50 1354.60,635.50 1345.60,640.50 1336.20,640.50" fill="none" stroke="#ff0000" stroke-width="1"/>
<line x1="1179.5" y1="645.5" x2="1207.2" y2="645.5" stroke="#ff0000" stroke-width="1"/>
<line x1="1207.2" y1="645.5" x2="1327.2" y2="645.5" stroke="#800040" stroke-width="1"/>
<polygon points="1327.20,645.50 1336.20,640.50 1345.60,640.50 1354.60,645.50 1345.60,649.50 1336.20,649.50" fill="none" stroke="#ff0000" stroke-width="1"/>
<line x1="1179.5" y1="663.5" x2="1207.2" y2="663.5" stroke="#ff0000" stroke-width="1"/>
<line x1="1207.2" y1="663.5" x2="1327.2" y2="663.5" stroke="#800040" stroke-width="1"/>
<polygon points="1327.20,663.50 1336.20,658.50 1345.60,658.50 1354.60,663.50 1345.60,667.50 1336.20,667.50" fill="none" stroke="#ff0000" stroke-width="1"/>
<line x1="1179.5" y1="672.5" x2="1207.2" y2="672.5" stroke="#ff0000" stroke-width="1"/>
<line x1="1207.2" y1="672.5" x2="1327.2" y2="672.5" stroke="#800040" stroke-width="1"/>
<polygon points="1327.20,672.50 1336.20,667.50 1345.60,667.50 1354.60,672.50 1345.60,677.50 1336.20,677.50" fill="none" stroke="#ff0000" stroke-width="1"/>
<line x1="1179.5" y1="691.5" x2="1207.2" y2="691.5" stroke="#ff0000" stroke-width="1"/>
<line x1="1207.2" y1="691.5" x2="1327.2" y2="691.5" stroke="#800040" stroke-width="1"/>
<polygon points="1327.20,691.50 1336.20,686.50 1345.60,686.50 1354.60,691.50 1345.60,695.50 1336.20,695.50" fill="none" stroke="#ff0000" stroke-width="1"/>
<line x1="1179.5" y1="700.5" x2="1207.2" y2="700.5" stroke="#ff0000" stroke-width="1"/>
<line x1="1207.2" y1="700.5" x2="1327.2" y2="700.5" stroke="#800040" stroke-width="1"/>
<polygon points="1327.20,700.50 1336.20,695.50 1345.60,695.50 1354.60,700.50 1345.60,704.50 1336.20,704.50" fill="none" stroke="#ff0000" stroke-width="1"/>
<line x1="1179.5" y1="718.5" x2="1207.2" y2="718.5" stroke="#ff0000" stroke-width="1"/>
<line x1="1207.2" y1="718.5" x2="1327.2" y2="718.5" stroke="#800040" stroke-width="1"/>
<polygon points="1327.20,718.50 1336.20,714.50 1345.60,714.50 1354.60,718.50 1345.60,723.50 1336.20,723.50" fill="none" stroke="#ff0000" stroke-width="1"/>
<line x1="1179.5" y1="728.5" x2="1207.2" y2="728.5" stroke="#ff0000" stroke-width="1"/>
<line x1="1207.2" y1="728.5" x2="1327.2" y2="728.5" stroke="#800040" stroke-width="1"/>
<polygon points="1327.20,728.50 1336.20,723.50 1345.60,723.50 1354.60,728.50 1345.60,732.50 1336.20,732.50" fill="none" stroke="#ff0000" stroke-width="1"/>
<line x1="1179.5" y1="811.5" x2="1207.2" y2="811.5" stroke="#ff0000" stroke-width="1"/>
<line x1="1207.2" y1="811.5" x2="1336.9" y2="811.5" stroke="#800040" stroke-width="1"/>
<line x1="1179.5" y1="820.5" x2="1207.2" y2="820.5" stroke="#ff0000" stroke-width="1"/>
<line x1="1207.2" y1="820.5" x2="1336.9" y2="820.5" stroke="#800040" stroke-width="1"/>
<line x1="1179.5" y1="829.5" x2="1207.2" y2="829.5" stroke="#ff0000" stroke-width="1"/>
<line x1="1207.2" y1="829.5" x2="1336.9" y2="829.5" stroke="#800040" stroke-width="1"/>
<line x1="1179.5" y1="838.5" x2="1207.2" y2="838.5" stroke="#ff0000" stroke-width="1"/>
<line x1="1207.2" y1="838.5" x2="1336.9" y2="838.5" stroke="#800040" stroke-width="1"/>
<line x1="1179.5" y1="866.5" x2="1207.2" y2="866.5" stroke="#ff0000" stroke-width="1"/>
<line x1="1207.2" y1="866.5" x2="1318.4" y2="866.5" stroke="#800040" stroke-width="1"/>
<polygon points="1318.40,861.50 1336.40,861.50 1345.40,866.50 1336.40,870.50 1318.40,870.50" fill="none" stroke="#ff0000" stroke-width="1"/>
<line x1="1179.5" y1="553.5" x2="1207.2" y2="553.5" stroke="#ff0000" stroke-width="1"/>
<line x1="1207.2" y1="553.5" x2="1318" y2="553.5" stroke="#800040" stroke-width="1"/>
<line x1="1318" y1="553.5" x2="1328" y2="553.5" stroke="#ff0000" stroke-width="1"/>
<polyline points="1328.00,553.50 1330.00,555.10 1333.60,551.40 1337.20,555.10 1340.80,551.40 1344.40,555.10 1346.40,553.50" fill="none" stroke="#0000ff" stroke-width="1.3"/>
<line x1="1346.4" y1="553.5" x2="1355.6000000000001" y2="553.5" stroke="#ff0000" stroke-width="1"/>
<line x1="1355.6000000000001" y1="553.5" x2="1401.5" y2="553.5" stroke="#800040" stroke-width="1"/>
<line x1="1179.5" y1="562.5" x2="1207.2" y2="562.5" stroke="#ff0000" stroke-width="1"/>
<line x1="1207.2" y1="562.5" x2="1318" y2="562.5" stroke="#800040" stroke-width="1"/>
<line x1="1318" y1="562.5" x2="1328" y2="562.5" stroke="#ff0000" stroke-width="1"/>
<polyline points="1328.00,562.50 1330.00,564.10 1333.60,560.40 1337.20,564.10 1340.80,560.40 1344.40,564.10 1346.40,562.50" fill="none" stroke="#0000ff" stroke-width="1.3"/>
<line x1="1346.4" y1="562.5" x2="1355.6000000000001" y2="562.5" stroke="#ff0000" stroke-width="1"/>
<line x1="1355.6000000000001" y1="562.5" x2="1401.5" y2="562.5" stroke="#800040" stroke-width="1"/>
<line x1="1401.5" y1="553.5" x2="1401.5" y2="553.5" stroke="#ff0000" stroke-width="1"/>
<line x1="1403.5" y1="546.8" x2="1403.5" y2="560.2" stroke="#ff0000" stroke-width="1"/>
<line x1="1406.5" y1="549.6" x2="1406.5" y2="557.4" stroke="#ff0000" stroke-width="1"/>
<line x1="1409.5" y1="552.3" x2="1409.5" y2="554.7" stroke="#ff0000" stroke-width="1"/>
<line x1="1401.5" y1="543.8" x2="1401.5" y2="562.5" stroke="#ff0000" stroke-width="1"/>
<circle cx="1407.6" cy="561.9238" r="2.5" fill="none" stroke="#ff0000" stroke-width="1"/>
<line x1="1401.4" y1="562.5" x2="1405.1" y2="562.5" stroke="#ff0000" stroke-width="1"/>
<line x1="1364.1" y1="838.5" x2="1474.7" y2="838.5" stroke="#000000" stroke-width="1"/>
<line x1="1474.7" y1="838.5" x2="1456" y2="829.2" stroke="#000000" stroke-width="1"/>
<path d="M1018.2,73.5H1027.5V276.5H1018.2" fill="none" stroke="#0000ff" stroke-width="1"/>
<path d="M1064.5,82.2V101.5H1073.6" fill="none" stroke="#0000ff"/>
<path d="M1073.6,110.5H1064.5V147.5H1073.6" fill="none" stroke="#0000ff" stroke-width="1"/>
<path d="M1101.5,165.5H1092.5V534.5H1101.5" fill="none" stroke="#0000ff" stroke-width="1"/>
<path d="M1027.3,294.5H1037.5V479.5H1027.3" fill="none" stroke="#0000ff" stroke-width="1"/>
<path d="M1027.3,507.5H1037.5V571.5H1027.3" fill="none" stroke="#0000ff" stroke-width="1"/>
<path d="M1101.5,553.5H1092.5V783.5H1101.5" fill="none" stroke="#0000ff" stroke-width="1"/>
<path d="M962.8,608.5H972.5V672.5H962.8" fill="none" stroke="#0000ff" stroke-width="1"/>
<path d="M1009.1,700.5H1018.5V811.5H1101.5" fill="none" stroke="#0000ff"/>
<line x1="28.5" y1="27.5" x2="277.5" y2="27.5" stroke="#000000" stroke-width="1" stroke-dasharray="17.7 11.1 6.1 11.1" stroke-dashoffset="27.1"/>
<line x1="28.5" y1="27.5" x2="28.5" y2="120.5" stroke="#000000" stroke-width="1" stroke-dasharray="17.7 11.1 6.1 11.1" stroke-dashoffset="0.4"/>
<line x1="277.5" y1="120.5" x2="277.5" y2="27.5" stroke="#000000" stroke-width="1" stroke-dasharray="17.7 11.1 6.1 11.1" stroke-dashoffset="17.8"/>
<line x1="277.5" y1="120.5" x2="28.5" y2="120.5" stroke="#000000" stroke-width="1" stroke-dasharray="17.7 11.1 6.1 11.1" stroke-dashoffset="44.4"/>
<line x1="28.5" y1="138.5" x2="313.5" y2="138.5" stroke="#000000" stroke-width="1" stroke-dasharray="17.7 11.1 6.1 11.1" stroke-dashoffset="27.6"/>
<line x1="28.5" y1="138.5" x2="28.5" y2="285.5" stroke="#000000" stroke-width="1" stroke-dasharray="17.7 11.1 6.1 11.1" stroke-dashoffset="0.3"/>
<line x1="313.5" y1="285.5" x2="313.5" y2="138.5" stroke="#000000" stroke-width="1" stroke-dasharray="17.7 11.1 6.1 11.1" stroke-dashoffset="18.3"/>
<line x1="313.5" y1="285.5" x2="28.5" y2="285.5" stroke="#000000" stroke-width="1" stroke-dasharray="17.7 11.1 6.1 11.1" stroke-dashoffset="45.4"/>
<line x1="28.5" y1="304.5" x2="277.5" y2="304.5" stroke="#000000" stroke-width="1" stroke-dasharray="17.7 11.1 6.1 11.1" stroke-dashoffset="36.4"/>
<line x1="28.5" y1="304.5" x2="28.5" y2="553.5" stroke="#000000" stroke-width="1" stroke-dasharray="17.7 11.1 6.1 11.1" stroke-dashoffset="0.9"/>
<line x1="277.5" y1="553.5" x2="277.5" y2="304.5" stroke="#000000" stroke-width="1" stroke-dasharray="17.7 11.1 6.1 11.1" stroke-dashoffset="36"/>
<line x1="277.5" y1="553.5" x2="28.5" y2="553.5" stroke="#000000" stroke-width="1" stroke-dasharray="17.7 11.1 6.1 11.1" stroke-dashoffset="31.8"/>
<line x1="28.5" y1="673.5" x2="350.5" y2="673.5" stroke="#000000" stroke-width="1" stroke-dasharray="17.7 11.1 6.1 11.1" stroke-dashoffset="18.2"/>
<line x1="28.5" y1="673.5" x2="28.5" y2="811.5" stroke="#000000" stroke-width="1" stroke-dasharray="17.7 11.1 6.1 11.1" stroke-dashoffset="0.5"/>
<line x1="350.5" y1="811.5" x2="350.5" y2="673.5" stroke="#000000" stroke-width="1" stroke-dasharray="17.7 11.1 6.1 11.1" stroke-dashoffset="45.4"/>
<line x1="350.5" y1="811.5" x2="28.5" y2="811.5" stroke="#000000" stroke-width="1" stroke-dasharray="17.7 11.1 6.1 11.1" stroke-dashoffset="17.7"/>
<line x1="28.5" y1="820.5" x2="350.5" y2="820.5" stroke="#000000" stroke-width="1" stroke-dasharray="17.5 5.4 6.1 5.4 6.1 5.4" stroke-dashoffset="9.1"/>
<line x1="28.5" y1="820.5" x2="28.5" y2="894.5" stroke="#000000" stroke-width="1" stroke-dasharray="17.5 5.4 6.1 5.4 6.1 5.4" stroke-dashoffset="0.9"/>
<line x1="350.5" y1="820.5" x2="350.5" y2="894.5" stroke="#000000" stroke-width="1" stroke-dasharray="17.5 5.4 6.1 5.4 6.1 5.4" stroke-dashoffset="9.1"/>
<line x1="28.5" y1="894.5" x2="350.5" y2="894.5" stroke="#000000" stroke-width="1" stroke-dasharray="17.5 5.4 6.1 5.4 6.1 5.4" stroke-dashoffset="28.3"/>
<line x1="608.5" y1="27.5" x2="839.5" y2="27.5" stroke="#000000" stroke-width="1" stroke-dasharray="6 5.5" stroke-dashoffset="10.7"/>
<line x1="608.5" y1="27.5" x2="608.5" y2="83.5" stroke="#000000" stroke-width="1" stroke-dasharray="6 5.5" stroke-dashoffset="0"/>
<line x1="839.5" y1="27.5" x2="839.5" y2="83.5" stroke="#000000" stroke-width="1" stroke-dasharray="6 5.5" stroke-dashoffset="10.7"/>
<line x1="608.5" y1="83.5" x2="839.5" y2="83.5" stroke="#000000" stroke-width="1" stroke-dasharray="6 5.5" stroke-dashoffset="9.2"/>
<line x1="673.5" y1="147.5" x2="737.5" y2="147.5" stroke="#000000" stroke-width="1" stroke-dasharray="6 5.5" stroke-dashoffset="1"/>
<line x1="673.5" y1="147.5" x2="673.5" y2="166.5" stroke="#000000" stroke-width="1" stroke-dasharray="6 5.5" stroke-dashoffset="0.5"/>
<line x1="737.5" y1="147.5" x2="737.5" y2="166.5" stroke="#000000" stroke-width="1" stroke-dasharray="6 5.5" stroke-dashoffset="7.7"/>
<line x1="673.5" y1="166.5" x2="737.5" y2="166.5" stroke="#000000" stroke-width="1" stroke-dasharray="6 5.5" stroke-dashoffset="8.1"/>
<line x1="673.5" y1="534.5" x2="737.5" y2="534.5" stroke="#000000" stroke-width="1" stroke-dasharray="6 5.5" stroke-dashoffset="1"/>
<line x1="673.5" y1="534.5" x2="673.5" y2="553.5" stroke="#000000" stroke-width="1" stroke-dasharray="6 5.5" stroke-dashoffset="0.5"/>
<line x1="737.5" y1="534.5" x2="737.5" y2="553.5" stroke="#000000" stroke-width="1" stroke-dasharray="6 5.5" stroke-dashoffset="7.7"/>
<line x1="1216.5" y1="543.5" x2="1419.5" y2="543.5" stroke="#000000" stroke-width="1" stroke-dasharray="6 5.5" stroke-dashoffset="5.5"/>
<line x1="1216.5" y1="543.5" x2="1216.5" y2="571.5" stroke="#000000" stroke-width="1" stroke-dasharray="6 5.5" stroke-dashoffset="0"/>
<line x1="1419.5" y1="543.5" x2="1419.5" y2="571.5" stroke="#000000" stroke-width="1" stroke-dasharray="6 5.5" stroke-dashoffset="1.5"/>
<line x1="1216.5" y1="571.5" x2="1419.5" y2="571.5" stroke="#000000" stroke-width="1" stroke-dasharray="6 5.5" stroke-dashoffset="4.3"/>
<line x1="1207.5" y1="820.5" x2="1355.5" y2="820.5" stroke="#000000" stroke-width="1" stroke-dasharray="17.7 11.1 6.1 11.1" stroke-dashoffset="36.3"/>
<line x1="1207.5" y1="820.5" x2="1207.5" y2="848.5" stroke="#000000" stroke-width="1" stroke-dasharray="17.7 11.1 6.1 11.1" stroke-dashoffset="0.5"/>
<line x1="1355.5" y1="820.5" x2="1355.5" y2="848.5" stroke="#000000" stroke-width="1" stroke-dasharray="17.7 11.1 6.1 11.1" stroke-dashoffset="0.5"/>
<line x1="1207.5" y1="848.5" x2="1355.5" y2="848.5" stroke="#000000" stroke-width="1" stroke-dasharray="17.7 11.1 6.1 11.1" stroke-dashoffset="27.7"/>
<circle cx="46.5" cy="64.5" r="2.0" fill="#ff00ff"/>
<circle cx="46.5" cy="82.5" r="2.0" fill="#ff00ff"/>
<circle cx="55.5" cy="175.5" r="2.0" fill="#ff00ff"/>
<circle cx="156.5" cy="248.5" r="2.0" fill="#ff00ff"/>
<circle cx="46.5" cy="350.5" r="2.0" fill="#ff00ff"/>
<circle cx="46.5" cy="368.5" r="2.0" fill="#ff00ff"/>
<circle cx="46.5" cy="387.5" r="2.0" fill="#ff00ff"/>
<circle cx="46.5" cy="405.5" r="2.0" fill="#ff00ff"/>
<circle cx="46.5" cy="433.5" r="2.0" fill="#ff00ff"/>
<circle cx="46.5" cy="451.5" r="2.0" fill="#ff00ff"/>
<circle cx="46.5" cy="479.5" r="2.0" fill="#ff00ff"/>
<circle cx="202.8" cy="479.5" r="2.0" fill="#ff00ff"/>
<circle cx="746.5" cy="525.5" r="2.0" fill="#ff00ff"/>
<circle cx="645.5" cy="626.5" r="2.0" fill="#ff00ff"/>
<circle cx="645.5" cy="635.5" r="2.0" fill="#ff00ff"/>
<circle cx="645.5" cy="645.5" r="2.0" fill="#ff00ff"/>
<circle cx="645.5" cy="654.5" r="2.0" fill="#ff00ff"/>
<circle cx="765.5" cy="230.5" r="2.0" fill="#ff00ff"/>
</svg></body></html>
